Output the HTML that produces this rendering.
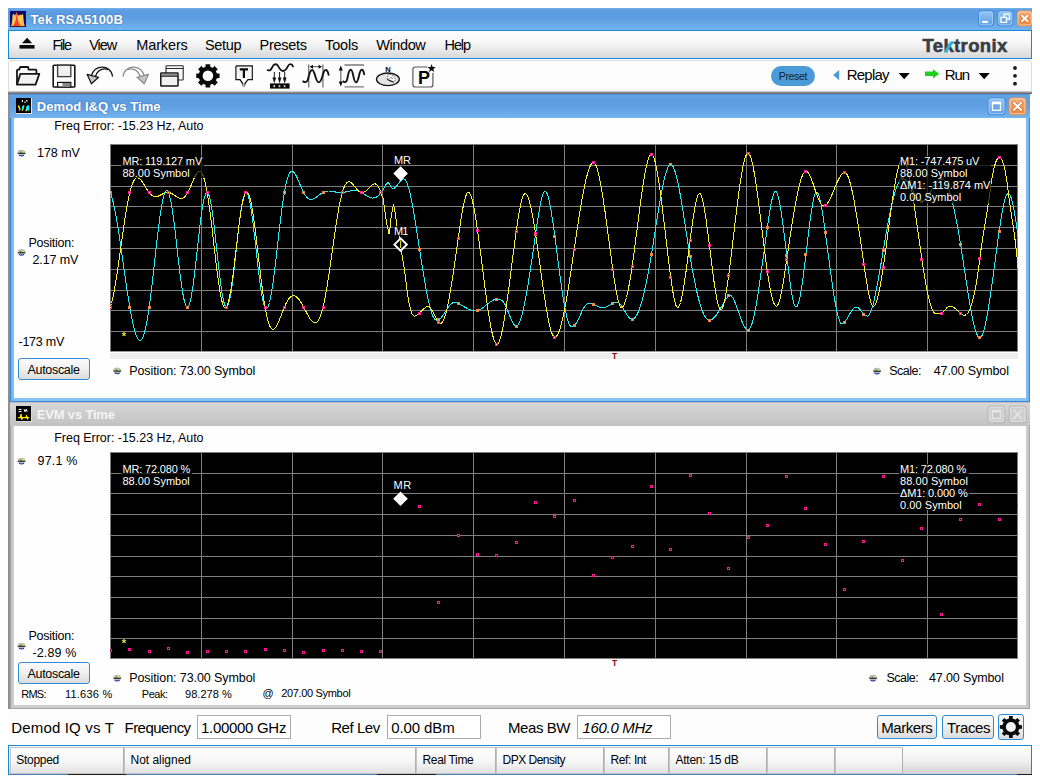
<!DOCTYPE html>
<html><head><meta charset="utf-8"><title>Tek RSA5100B</title>
<style>
html,body{margin:0;padding:0;background:#fff;}
body{width:1040px;height:784px;position:relative;overflow:hidden;font-family:'Liberation Sans', sans-serif;}
body>div,body>svg{position:absolute;box-sizing:border-box;}
div div{box-sizing:border-box;}
.t{z-index:3;position:absolute;white-space:pre;line-height:40px;font-family:'Liberation Sans', sans-serif;color:#000;}
</style></head><body>
<div style="left:8px;top:8px;width:1024px;height:22px;background:linear-gradient(to bottom,#74b3ee 0%,#5d9de1 9%,#5c9ce0 30%,#60a1e3 55%,#72b5ef 100%);"></div>
<div style="left:8px;top:30px;width:1024px;height:29px;border:1px solid #1c86d6;background:linear-gradient(to bottom,#fefefe 0%,#f6f6f6 45%,#d8d8d8 100%);"></div>
<div style="left:8px;top:60px;width:1024px;height:32px;border:1px solid #dcdcdc;border-radius:3px;background:#fdfdfd;"></div>
<div style="left:8px;top:91px;width:1024px;height:3px;background:linear-gradient(to bottom,#e0e0e0 0%,#8a8a8a 55%,#5a5a5a 100%);"></div>
<div style="left:771px;top:66px;width:44px;height:20px;background:#4b9bd9;border-radius:10px;"></div>
<div style="left:8px;top:94px;width:1022px;height:308px;background:#3c84d6;"></div>
<div style="left:8px;top:94px;width:1.5px;height:308px;background:#8f8f8f;"></div>
<div style="left:11px;top:94px;width:1018px;height:306.8px;background:linear-gradient(to right,#6eb1ee 0,#86c1f4 3px,#86c1f4 1015px,#6eb1ee 1018px);"></div>
<div style="left:9.5px;top:94px;width:1020.5px;height:24px;background:linear-gradient(to bottom,#4c8fdc 0%,#62a3e6 6%,#5d9ee1 30%,#609fe2 55%,#74b6f0 100%);"></div>
<div style="left:14px;top:118px;width:1012px;height:280px;background:#fefefe;"></div>
<div style="left:18px;top:358px;width:72px;height:22px;border:1px solid #2c8bd6;border-radius:3px;background:linear-gradient(to bottom,#fafafa 0%,#f0f0f0 50%,#dcdcdc 100%);"></div>
<div style="left:8px;top:402px;width:1022px;height:307px;background:#a6a6a6;"></div>
<div style="left:8px;top:402px;width:1.5px;height:307px;background:#8f8f8f;"></div>
<div style="left:11px;top:402px;width:1018px;height:305.8px;background:linear-gradient(to right,#c4c4c4 0,#cfcfcf 3px,#cfcfcf 1015px,#c4c4c4 1018px);"></div>
<div style="left:9.5px;top:402px;width:1020.5px;height:24px;background:linear-gradient(to bottom,#b4b4b4 0%,#d6d6d6 6%,#cfcfcf 40%,#c2c2c2 100%);"></div>
<div style="left:14px;top:426px;width:1012px;height:279px;background:#fefefe;"></div>
<div style="left:18px;top:662px;width:72px;height:22px;border:1px solid #2c8bd6;border-radius:3px;background:linear-gradient(to bottom,#fafafa 0%,#f0f0f0 50%,#dcdcdc 100%);"></div>
<div style="left:8px;top:709px;width:1024px;height:36px;background:#fdfdfd;"></div>
<div style="left:197px;top:715px;width:94px;height:24px;border:1px solid #ababab;background:#fff;"></div>
<div style="left:387px;top:715px;width:94px;height:24px;border:1px solid #ababab;background:#fff;"></div>
<div style="left:577px;top:715px;width:94px;height:24px;border:1px solid #ababab;background:#fff;"></div>
<div style="left:877px;top:715px;width:60px;height:24px;border:1px solid #2c8bd6;border-radius:3px;background:linear-gradient(to bottom,#fafafa 0%,#f0f0f0 50%,#dcdcdc 100%);"></div>
<div style="left:942px;top:715px;width:52px;height:24px;border:1px solid #2c8bd6;border-radius:3px;background:linear-gradient(to bottom,#fafafa 0%,#f0f0f0 50%,#dcdcdc 100%);"></div>
<div style="left:998px;top:714px;width:26px;height:26px;border:1px solid #2c8bd6;border-radius:3px;background:linear-gradient(to bottom,#fafafa 0%,#f0f0f0 50%,#dcdcdc 100%);"></div>
<div style="left:8px;top:745px;width:1024px;height:30px;border:1px solid #1c86d6;border-bottom-color:#4f7fb4;background:linear-gradient(to bottom,#fefefe 0%,#f2f2f2 50%,#d2d2d2 100%);"></div>
<div style="left:10px;top:747px;width:114px;height:27px;border:1px solid #c4c4c4;border-right-color:#b0b0b0;background:linear-gradient(to bottom,#fefefe 0%,#f6f6f6 55%,#e2e2e2 100%);"></div>
<div style="left:124px;top:747px;width:292px;height:27px;border:1px solid #c4c4c4;border-right-color:#b0b0b0;background:linear-gradient(to bottom,#fefefe 0%,#f6f6f6 55%,#e2e2e2 100%);"></div>
<div style="left:416px;top:747px;width:80px;height:27px;border:1px solid #c4c4c4;border-right-color:#b0b0b0;background:linear-gradient(to bottom,#fefefe 0%,#f6f6f6 55%,#e2e2e2 100%);"></div>
<div style="left:496px;top:747px;width:108px;height:27px;border:1px solid #c4c4c4;border-right-color:#b0b0b0;background:linear-gradient(to bottom,#fefefe 0%,#f6f6f6 55%,#e2e2e2 100%);"></div>
<div style="left:604px;top:747px;width:65px;height:27px;border:1px solid #c4c4c4;border-right-color:#b0b0b0;background:linear-gradient(to bottom,#fefefe 0%,#f6f6f6 55%,#e2e2e2 100%);"></div>
<div style="left:669px;top:747px;width:98px;height:27px;border:1px solid #c4c4c4;border-right-color:#b0b0b0;background:linear-gradient(to bottom,#fefefe 0%,#f6f6f6 55%,#e2e2e2 100%);"></div>
<div style="left:767px;top:747px;width:68px;height:27px;border:1px solid #c4c4c4;border-right-color:#b0b0b0;background:linear-gradient(to bottom,#fefefe 0%,#f6f6f6 55%,#e2e2e2 100%);"></div>
<div style="left:835px;top:747px;width:67.5px;height:27px;border:1px solid #c4c4c4;border-right-color:#b0b0b0;background:linear-gradient(to bottom,#fefefe 0%,#f6f6f6 55%,#e2e2e2 100%);"></div>
<div style="left:67.5px;top:774.3px;width:58.5px;height:1.2px;background:#1a1a1a;"></div>
<div style="left:377px;top:774.3px;width:59px;height:1.2px;background:#1a1a1a;"></div>
<div style="left:1017px;top:774.3px;width:15px;height:1.2px;background:#1a1a1a;"></div>
<svg style="left:0;top:0;pointer-events:none" width="1040" height="784" viewBox="0 0 1040 784"><rect x="110" y="144" width="908" height="207.39999999999998" fill="#000"/><path d="M110 144.5H1018M110 165.5H1018M110 186.5H1018M110 206.5H1018M110 227.5H1018M110 248.5H1018M110 269.5H1018M110 290.5H1018M110 310.5H1018M110 331.5H1018M110.5 144V351.4M201.5 144V351.4M292.5 144V351.4M382.5 144V351.4M473.5 144V351.4M564.5 144V351.4M655.5 144V351.4M746.5 144V351.4M836.5 144V351.4M927.5 144V351.4M1017.5 144V351.4" stroke="#7d7d7d" stroke-width="1" fill="none" shape-rendering="crispEdges"/><rect x="110" y="452" width="908" height="206.5" fill="#000"/><path d="M110 452.5H1018M110 473.5H1018M110 493.5H1018M110 514.5H1018M110 535.5H1018M110 556.5H1018M110 576.5H1018M110 597.5H1018M110 618.5H1018M110 638.5H1018M110.5 452V658.5M201.5 452V658.5M292.5 452V658.5M382.5 452V658.5M473.5 452V658.5M564.5 452V658.5M655.5 452V658.5M746.5 452V658.5M836.5 452V658.5M927.5 452V658.5M1017.5 452V658.5" stroke="#7d7d7d" stroke-width="1" fill="none" shape-rendering="crispEdges"/><rect x="110" y="353" width="908" height="6" fill="#efefef"/><clipPath id="c1"><rect x="110" y="144" width="908" height="207.5"/></clipPath><g clip-path="url(#c1)"><path d="M110.5 192.5 L111.5 195.7 L112.5 199.4 L113.5 203.6 L114.5 208.3 L115.5 213.4 L116.5 219.0 L117.5 224.9 L118.5 231.1 L119.5 237.6 L120.5 244.4 L121.5 251.3 L122.5 258.3 L123.5 265.3 L124.5 272.3 L125.5 279.3 L126.5 286.1 L127.5 292.8 L128.5 299.2 L129.5 305.3 L130.5 311.1 L131.5 316.5 L132.5 321.5 L133.5 326.0 L134.5 330.0 L135.5 333.4 L136.5 336.2 L137.5 338.3 L138.5 339.8 L139.5 340.5 L140.5 340.5 L141.5 339.7 L142.5 338.0 L143.5 335.6 L144.5 332.4 L145.5 328.3 L146.5 323.5 L147.5 317.9 L148.5 311.6 L149.5 304.6 L150.5 297.0 L151.5 289.0 L152.5 280.5 L153.5 271.7 L154.5 262.8 L155.5 253.8 L156.5 244.8 L157.5 236.1 L158.5 227.8 L159.5 220.0 L160.5 212.9 L161.5 206.5 L162.5 201.1 L163.5 196.7 L164.5 193.4 L165.5 191.3 L166.5 190.5 L167.5 190.9 L168.5 192.6 L169.5 195.5 L170.5 199.7 L171.5 204.9 L172.5 211.1 L173.5 218.2 L174.5 226.0 L175.5 234.4 L176.5 243.1 L177.5 252.0 L178.5 260.8 L179.5 269.4 L180.5 277.5 L181.5 285.0 L182.5 291.6 L183.5 297.3 L184.5 301.7 L185.5 305.0 L186.5 306.8 L187.5 307.3 L188.5 306.4 L189.5 304.0 L190.5 300.3 L191.5 295.4 L192.5 289.3 L193.5 282.2 L194.5 274.3 L195.5 265.7 L196.5 256.7 L197.5 247.6 L198.5 238.5 L199.5 229.7 L200.5 221.4 L201.5 213.8 L202.5 207.1 L203.5 201.6 L204.5 197.2 L205.5 194.3 L206.5 192.7 L207.5 192.7 L208.5 194.1 L209.5 196.9 L210.5 201.2 L211.5 206.7 L212.5 213.3 L213.5 220.9 L214.5 229.2 L215.5 238.1 L216.5 247.3 L217.5 256.6 L218.5 265.6 L219.5 274.3 L220.5 282.3 L221.5 289.5 L222.5 295.7 L223.5 300.6 L224.5 304.3 L225.5 306.5 L226.5 307.2 L227.5 306.5 L228.5 304.2 L229.5 300.6 L230.5 295.7 L231.5 289.5 L232.5 282.4 L233.5 274.4 L234.5 265.8 L235.5 256.8 L236.5 247.6 L237.5 238.5 L238.5 229.6 L239.5 221.3 L240.5 213.8 L241.5 207.1 L242.5 201.6 L243.5 197.3 L244.5 194.3 L245.5 192.7 L246.5 192.5 L247.5 193.8 L248.5 196.5 L249.5 200.5 L250.5 205.7 L251.5 212.0 L252.5 219.2 L253.5 227.2 L254.5 235.7 L255.5 244.5 L256.5 253.5 L257.5 262.4 L258.5 270.9 L259.5 279.0 L260.5 286.4 L261.5 292.9 L262.5 298.4 L263.5 302.8 L264.5 306.0 L265.5 307.9 L266.5 308.5 L267.5 307.8 L268.5 305.8 L269.5 302.5 L270.5 298.1 L271.5 292.7 L272.5 286.3 L273.5 279.1 L274.5 271.3 L275.5 263.0 L276.5 254.4 L277.5 245.6 L278.5 236.9 L279.5 228.2 L280.5 219.9 L281.5 212.0 L282.5 204.6 L283.5 197.8 L284.5 191.8 L285.5 186.5 L286.5 182.0 L287.5 178.3 L288.5 175.4 L289.5 173.3 L290.5 172.0 L291.5 171.4 L292.5 171.4 L293.5 172.0 L294.5 173.1 L295.5 174.7 L296.5 176.5 L297.5 178.6 L298.5 180.9 L299.5 183.3 L300.5 185.6 L301.5 187.9 L302.5 190.1 L303.5 192.1 L304.5 193.9 L305.5 195.5 L306.5 196.8 L307.5 197.9 L308.5 198.7 L309.5 199.2 L310.5 199.4 L311.5 199.5 L312.5 199.3 L313.5 198.9 L314.5 198.4 L315.5 197.8 L316.5 197.1 L317.5 196.4 L318.5 195.6 L319.5 194.8 L320.5 194.1 L321.5 193.4 L322.5 192.8 L323.5 192.3 L324.5 191.8 L325.5 191.5 L326.5 191.2 L327.5 191.1 L328.5 191.0 L329.5 191.0 L330.5 191.1 L331.5 191.2 L332.5 191.4 L333.5 191.6 L334.5 191.8 L335.5 192.0 L336.5 192.2 L337.5 192.3 L338.5 192.5 L339.5 192.5 L340.5 192.6 L341.5 192.6 L342.5 192.5 L343.5 192.4 L344.5 192.2 L345.5 192.0 L346.5 191.8 L347.5 191.6 L348.5 191.3 L349.5 191.1 L350.5 190.8 L351.5 190.7 L352.5 190.5 L353.5 190.4 L354.5 190.4 L355.5 190.4 L356.5 190.6 L357.5 190.8 L358.5 191.1 L359.5 191.4 L360.5 191.9 L361.5 192.4 L362.5 193.0 L363.5 193.6 L364.5 194.3 L365.5 194.9 L366.5 195.6 L367.5 196.2 L368.5 196.8 L369.5 197.2 L370.5 197.6 L371.5 197.9 L372.5 198.1 L373.5 198.0 L374.5 197.9 L375.5 197.5 L376.5 197.0 L377.5 196.3 L378.5 195.4 L379.5 194.3 L380.5 193.1 L381.5 191.8 L382.5 190.3 L383.0 190.0 L384.0 188.3 L385.0 186.4 L386.0 184.6 L387.0 183.2 L388.0 182.7 L389.0 183.4 L390.0 185.0 L391.0 186.8 L392.0 188.3 L393.0 188.7 L394.0 188.4 L395.0 187.7 L396.0 186.7 L397.0 185.5 L398.0 184.2 L399.0 182.8 L400.0 181.5 L401.0 180.4 L402.0 179.5 L403.0 178.9 L404.0 178.8 L405.0 179.4 L406.0 180.8 L407.0 183.0 L408.0 185.8 L409.0 189.2 L410.0 193.3 L411.0 197.8 L412.0 202.8 L413.0 208.2 L414.0 213.9 L415.0 219.9 L416.0 226.2 L417.0 232.6 L418.0 239.1 L419.0 245.6 L420.0 252.2 L421.0 258.6 L422.0 265.0 L423.0 271.2 L424.0 277.3 L425.0 283.1 L426.0 288.7 L427.0 293.9 L428.0 298.8 L429.0 303.2 L430.0 307.3 L431.0 310.8 L432.0 313.9 L433.0 316.4 L434.0 318.2 L435.0 319.4 L436.0 320.0 L437.0 320.0 L438.0 319.8 L439.0 319.4 L440.0 318.7 L441.0 317.8 L442.0 316.6 L443.0 315.3 L444.0 313.8 L445.0 312.3 L446.0 310.7 L447.0 309.2 L448.0 307.7 L449.0 306.3 L450.0 305.1 L451.0 304.0 L452.0 303.2 L453.0 302.7 L454.0 302.5 L455.0 302.5 L456.0 302.7 L457.0 303.1 L458.0 303.5 L459.0 303.9 L460.0 304.4 L461.0 304.9 L462.0 305.5 L463.0 306.1 L464.0 306.7 L465.0 307.2 L466.0 307.8 L467.0 308.3 L468.0 308.9 L469.0 309.3 L470.0 309.7 L471.0 310.1 L472.0 310.4 L473.0 310.6 L474.0 310.7 L475.0 310.7 L476.0 310.6 L477.0 310.5 L478.0 310.3 L479.0 309.9 L480.0 309.5 L481.0 308.9 L482.0 308.3 L483.0 307.6 L484.0 306.8 L485.0 306.0 L486.0 305.2 L487.0 304.4 L488.0 303.6 L489.0 302.8 L490.0 302.1 L491.0 301.4 L492.0 300.8 L493.0 300.2 L494.0 299.8 L495.0 299.4 L496.0 299.2 L497.0 299.2 L498.0 299.2 L499.0 299.3 L500.0 299.5 L501.0 299.9 L502.0 300.5 L503.0 301.4 L504.0 302.7 L505.0 304.4 L506.0 306.5 L507.0 308.9 L508.0 311.4 L509.0 313.9 L510.0 316.5 L511.0 318.9 L512.0 321.1 L513.0 323.0 L514.0 324.5 L515.0 325.6 L516.0 326.0 L517.0 325.8 L518.0 324.8 L519.0 323.2 L520.0 320.9 L521.0 318.1 L522.0 314.6 L523.0 310.7 L524.0 306.2 L525.0 301.4 L526.0 296.1 L527.0 290.5 L528.0 284.6 L529.0 278.4 L530.0 272.0 L531.0 265.4 L532.0 258.7 L533.0 251.9 L534.0 245.0 L535.0 238.1 L536.0 231.2 L537.0 224.5 L538.0 218.0 L539.0 211.9 L540.0 206.3 L541.0 201.4 L542.0 197.3 L543.0 194.2 L544.0 192.1 L545.0 191.2 L546.0 191.7 L547.0 193.4 L548.0 196.3 L549.0 200.1 L550.0 204.8 L551.0 210.3 L552.0 216.5 L553.0 223.2 L554.0 230.2 L555.0 237.6 L556.0 245.2 L557.0 252.9 L558.0 260.6 L559.0 268.2 L560.0 275.7 L561.0 283.0 L562.0 290.0 L563.0 296.6 L564.0 302.7 L565.0 308.3 L566.0 313.3 L567.0 317.6 L568.0 321.2 L569.0 323.8 L570.0 325.6 L571.0 326.3 L572.0 326.3 L573.0 326.1 L574.0 325.6 L575.0 324.7 L576.0 323.4 L577.0 321.8 L578.0 319.9 L579.0 317.9 L580.0 315.7 L581.0 313.5 L582.0 311.4 L583.0 309.4 L584.0 307.6 L585.0 306.0 L586.0 304.7 L587.0 303.9 L588.0 303.6 L589.0 303.6 L590.0 303.6 L591.0 303.8 L592.0 303.9 L593.0 304.2 L594.0 304.6 L595.0 305.0 L596.0 305.6 L597.0 306.1 L598.0 306.6 L599.0 307.0 L600.0 307.4 L601.0 307.6 L602.0 307.7 L603.0 307.6 L604.0 307.4 L605.0 307.2 L606.0 306.9 L607.0 306.5 L608.0 306.0 L609.0 305.5 L610.0 305.0 L611.0 304.5 L612.0 304.0 L613.0 303.5 L614.0 303.0 L615.0 302.6 L616.0 302.3 L617.0 302.2 L618.0 302.4 L619.0 303.1 L620.0 304.0 L621.0 305.3 L622.0 306.7 L623.0 308.3 L624.0 309.9 L625.0 311.6 L626.0 313.3 L627.0 314.9 L628.0 316.3 L629.0 317.6 L630.0 318.5 L631.0 319.2 L632.0 319.4 L633.0 319.3 L634.0 318.7 L635.0 317.7 L636.0 316.4 L637.0 314.6 L638.0 312.5 L639.0 310.0 L640.0 307.2 L641.0 304.1 L642.0 300.6 L643.0 296.8 L644.0 292.7 L645.0 288.4 L646.0 283.7 L647.0 278.8 L648.0 273.7 L649.0 268.3 L650.0 262.7 L651.0 256.9 L652.0 250.8 L653.0 244.6 L654.0 238.3 L655.0 231.9 L656.0 225.5 L657.0 219.2 L658.0 213.0 L659.0 206.8 L660.0 200.9 L661.0 195.3 L662.0 190.0 L663.0 185.0 L664.0 180.4 L665.0 176.3 L666.0 172.7 L667.0 169.7 L668.0 167.3 L669.0 165.6 L670.0 164.6 L671.0 164.4 L672.0 165.0 L673.0 166.4 L674.0 168.6 L675.0 171.4 L676.0 174.8 L677.0 178.8 L678.0 183.2 L679.0 188.2 L680.0 193.5 L681.0 199.1 L682.0 205.1 L683.0 211.2 L684.0 217.6 L685.0 224.0 L686.0 230.5 L687.0 237.0 L688.0 243.5 L689.0 249.8 L690.0 256.0 L691.0 261.9 L692.0 267.7 L693.0 273.1 L694.0 278.4 L695.0 283.3 L696.0 288.0 L697.0 292.4 L698.0 296.5 L699.0 300.4 L700.0 303.9 L701.0 307.1 L702.0 310.0 L703.0 312.5 L704.0 314.7 L705.0 316.5 L706.0 318.0 L707.0 319.1 L708.0 319.9 L709.0 320.2 L710.0 320.2 L711.0 319.9 L712.0 319.4 L713.0 318.7 L714.0 317.7 L715.0 316.6 L716.0 315.4 L717.0 314.0 L718.0 312.5 L719.0 310.9 L720.0 309.3 L721.0 307.6 L722.0 305.9 L723.0 304.1 L724.0 302.4 L725.0 300.8 L726.0 299.2 L727.0 297.7 L728.0 296.3 L729.0 295.0 L730.0 294.9 L731.0 295.5 L732.0 296.7 L733.0 298.3 L734.0 300.2 L735.0 302.5 L736.0 305.0 L737.0 307.7 L738.0 310.5 L739.0 313.3 L740.0 316.1 L741.0 318.9 L742.0 321.4 L743.0 323.8 L744.0 325.9 L745.0 327.6 L746.0 329.0 L747.0 329.8 L748.0 330.1 L749.0 329.7 L750.0 328.4 L751.0 326.3 L752.0 323.5 L753.0 319.9 L754.0 315.7 L755.0 311.0 L756.0 305.7 L757.0 299.9 L758.0 293.8 L759.0 287.3 L760.0 280.5 L761.0 273.5 L762.0 266.3 L763.0 259.0 L764.0 251.7 L765.0 244.3 L766.0 237.0 L767.0 229.9 L768.0 222.9 L769.0 216.2 L770.0 210.0 L771.0 204.4 L772.0 199.6 L773.0 195.7 L774.0 192.9 L775.0 191.5 L776.0 191.4 L777.0 192.8 L778.0 195.6 L779.0 199.6 L780.0 204.7 L781.0 210.7 L782.0 217.5 L783.0 224.9 L784.0 232.8 L785.0 241.0 L786.0 249.4 L787.0 257.8 L788.0 266.2 L789.0 274.2 L790.0 281.7 L791.0 288.6 L792.0 294.7 L793.0 299.7 L794.0 303.6 L795.0 306.1 L796.0 307.1 L797.0 306.5 L798.0 304.5 L799.0 301.2 L800.0 296.7 L801.0 291.3 L802.0 285.0 L803.0 278.0 L804.0 270.4 L805.0 262.4 L806.0 254.2 L807.0 245.7 L808.0 237.4 L809.0 229.2 L810.0 221.4 L811.0 214.1 L812.0 207.6 L813.0 202.0 L814.0 197.5 L815.0 194.2 L816.0 192.4 L817.0 192.1 L818.0 193.4 L819.0 195.9 L820.0 199.6 L821.0 204.3 L822.0 209.9 L823.0 216.1 L824.0 222.9 L825.0 230.1 L826.0 237.5 L827.0 245.0 L828.0 252.7 L829.0 260.3 L830.0 267.8 L831.0 275.2 L832.0 282.3 L833.0 289.1 L834.0 295.5 L835.0 301.5 L836.0 306.9 L837.0 311.8 L838.0 315.9 L839.0 319.3 L840.0 321.8 L841.0 323.5 L842.0 324.1 L843.0 323.8 L844.0 322.9 L845.0 321.7 L846.0 320.2 L847.0 318.7 L848.0 317.0 L849.0 315.3 L850.0 313.6 L851.0 312.0 L852.0 310.5 L853.0 309.2 L854.0 308.2 L855.0 307.5 L856.0 307.2 L857.0 307.2 L858.0 307.7 L859.0 308.5 L860.0 309.5 L861.0 310.7 L862.0 312.0 L863.0 313.2 L864.0 314.3 L865.0 315.2 L866.0 315.8 L867.0 316.1 L868.0 316.0 L869.0 315.1 L870.0 313.4 L871.0 311.1 L872.0 308.2 L873.0 304.7 L874.0 300.8 L875.0 296.3 L876.0 291.5 L877.0 286.4 L878.0 281.0 L879.0 275.3 L880.0 269.5 L881.0 263.6 L882.0 257.7 L883.0 251.7 L884.0 245.8 L885.0 240.0 L886.0 234.3 L887.0 228.7 L888.0 223.3 L889.0 218.1 L890.0 213.1 L891.0 208.4 L892.0 203.9 L893.0 199.7 L894.0 195.8 L895.0 192.2 L896.0 189.0 L897.0 186.1 L898.0 183.7 L899.0 181.7 L900.0 180.1 L901.0 179.1 L902.0 178.5 L903.0 178.4 L904.0 178.8 L905.0 179.4 L906.0 180.3 L907.0 181.4 L908.0 182.8 L909.0 184.3 L910.0 185.9 L911.0 187.6 L912.0 189.4 L913.0 191.2 L914.0 192.9 L915.0 194.6 L916.0 196.2 L917.0 197.6 L918.0 198.9 L919.0 199.9 L920.0 200.7 L921.0 201.2 L922.0 201.3 L923.0 201.1 L924.0 200.5 L925.0 199.7 L926.0 198.6 L927.0 197.3 L928.0 195.9 L929.0 194.3 L930.0 192.6 L931.0 190.8 L932.0 189.0 L933.0 187.3 L934.0 185.5 L935.0 183.9 L936.0 182.4 L937.0 181.1 L938.0 180.0 L939.0 179.1 L940.0 178.6 L941.0 178.3 L942.0 178.4 L943.0 179.0 L944.0 179.9 L945.0 181.2 L946.0 182.9 L947.0 185.0 L948.0 187.4 L949.0 190.2 L950.0 193.4 L951.0 196.8 L952.0 200.6 L953.0 204.7 L954.0 209.1 L955.0 213.7 L956.0 218.7 L957.0 223.9 L958.0 229.4 L959.0 235.1 L960.0 241.1 L961.0 247.2 L962.0 253.6 L963.0 260.1 L964.0 266.7 L965.0 273.3 L966.0 279.9 L967.0 286.4 L968.0 292.8 L969.0 299.0 L970.0 304.9 L971.0 310.5 L972.0 315.7 L973.0 320.6 L974.0 324.9 L975.0 328.7 L976.0 331.9 L977.0 334.5 L978.0 336.4 L979.0 337.5 L980.0 337.8 L981.0 337.2 L982.0 335.6 L983.0 333.2 L984.0 330.0 L985.0 326.1 L986.0 321.5 L987.0 316.4 L988.0 310.7 L989.0 304.5 L990.0 298.0 L991.0 291.1 L992.0 284.0 L993.0 276.7 L994.0 269.2 L995.0 261.7 L996.0 254.2 L997.0 246.8 L998.0 239.5 L999.0 232.5 L1000.0 225.7 L1001.0 219.3 L1002.0 213.4 L1003.0 208.0 L1004.0 203.3 L1005.0 199.4 L1006.0 196.4 L1007.0 194.4 L1008.0 193.5 L1009.0 193.7 L1010.0 195.0 L1011.0 197.4 L1012.0 200.7 L1013.0 204.9 L1014.0 209.9 L1015.0 215.7 L1016.0 222.1 L1017.0 229.1 L1018.0 236.6" stroke="#22eef6" stroke-width="1" fill="none" shape-rendering="crispEdges"/><path d="M110.5 307.2 L111.5 303.5 L112.5 299.3 L113.5 294.4 L114.5 289.1 L115.5 283.3 L116.5 277.0 L117.5 270.5 L118.5 263.6 L119.5 256.6 L120.5 249.4 L121.5 242.3 L122.5 235.2 L123.5 228.2 L124.5 221.5 L125.5 215.1 L126.5 209.1 L127.5 203.5 L128.5 198.4 L129.5 193.8 L130.5 189.8 L131.5 186.4 L132.5 183.6 L133.5 181.3 L134.5 179.6 L135.5 178.5 L136.5 177.8 L137.5 177.7 L138.5 178.0 L139.5 178.6 L140.5 179.6 L141.5 180.8 L142.5 182.2 L143.5 183.8 L144.5 185.4 L145.5 187.0 L146.5 188.7 L147.5 190.2 L148.5 191.7 L149.5 192.9 L150.5 194.1 L151.5 195.0 L152.5 195.7 L153.5 196.2 L154.5 196.5 L155.5 196.6 L156.5 196.5 L157.5 196.3 L158.5 196.0 L159.5 195.5 L160.5 195.0 L161.5 194.5 L162.5 194.0 L163.5 193.5 L164.5 193.1 L165.5 192.8 L166.5 192.5 L167.5 192.5 L168.5 192.5 L169.5 192.7 L170.5 193.0 L171.5 193.5 L172.5 194.0 L173.5 194.7 L174.5 195.4 L175.5 196.1 L176.5 196.8 L177.5 197.4 L178.5 197.9 L179.5 198.3 L180.5 198.6 L181.5 198.6 L182.5 198.3 L183.5 197.8 L184.5 197.1 L185.5 196.0 L186.5 194.6 L187.5 193.0 L188.5 191.1 L189.5 189.0 L190.5 186.8 L191.5 184.4 L192.5 182.1 L193.5 179.7 L194.5 177.5 L195.5 175.5 L196.5 173.7 L197.5 172.4 L198.5 171.5 L199.5 171.2 L200.5 171.5 L201.5 172.5 L202.5 174.2 L203.5 176.8 L204.5 180.1 L205.5 184.2 L206.5 189.2 L207.5 194.9 L208.5 201.3 L209.5 208.4 L210.5 216.0 L211.5 224.1 L212.5 232.5 L213.5 241.1 L214.5 249.8 L215.5 258.4 L216.5 266.7 L217.5 274.6 L218.5 282.0 L219.5 288.7 L220.5 294.5 L221.5 299.5 L222.5 303.3 L223.5 306.1 L224.5 307.6 L225.5 308.0 L226.5 307.1 L227.5 305.0 L228.5 301.7 L229.5 297.3 L230.5 291.9 L231.5 285.6 L232.5 278.6 L233.5 270.9 L234.5 262.8 L235.5 254.4 L236.5 245.9 L237.5 237.5 L238.5 229.4 L239.5 221.7 L240.5 214.6 L241.5 208.3 L242.5 202.8 L243.5 198.4 L244.5 195.0 L245.5 192.8 L246.5 191.9 L247.5 192.1 L248.5 193.5 L249.5 196.2 L250.5 199.9 L251.5 204.7 L252.5 210.4 L253.5 217.0 L254.5 224.3 L255.5 232.1 L256.5 240.3 L257.5 248.8 L258.5 257.4 L259.5 266.0 L260.5 274.4 L261.5 282.5 L262.5 290.2 L263.5 297.3 L264.5 303.9 L265.5 309.7 L266.5 314.9 L267.5 319.2 L268.5 322.8 L269.5 325.6 L270.5 327.6 L271.5 328.9 L272.5 329.5 L273.5 329.4 L274.5 328.8 L275.5 327.7 L276.5 326.1 L277.5 324.2 L278.5 321.9 L279.5 319.5 L280.5 317.0 L281.5 314.4 L282.5 311.8 L283.5 309.3 L284.5 306.9 L285.5 304.7 L286.5 302.6 L287.5 300.8 L288.5 299.3 L289.5 298.0 L290.5 297.1 L291.5 296.3 L292.5 295.9 L293.5 295.8 L294.5 295.9 L295.5 296.3 L296.5 297.0 L297.5 297.9 L298.5 299.0 L299.5 300.2 L300.5 301.7 L301.5 303.3 L302.5 305.0 L303.5 306.8 L304.5 308.7 L305.5 310.6 L306.5 312.5 L307.5 314.4 L308.5 316.2 L309.5 317.9 L310.5 319.4 L311.5 320.7 L312.5 321.7 L313.5 322.5 L314.5 322.9 L315.5 322.9 L316.5 322.4 L317.5 321.5 L318.5 320.2 L319.5 318.2 L320.5 315.8 L321.5 312.8 L322.5 309.2 L323.5 305.1 L324.5 300.5 L325.5 295.3 L326.5 289.7 L327.5 283.7 L328.5 277.3 L329.5 270.7 L330.5 263.8 L331.5 256.7 L332.5 249.6 L333.5 242.5 L334.5 235.5 L335.5 228.7 L336.5 222.1 L337.5 215.9 L338.5 210.1 L339.5 204.7 L340.5 199.9 L341.5 195.6 L342.5 191.9 L343.5 188.8 L344.5 186.3 L345.5 184.4 L346.5 183.0 L347.5 182.2 L348.5 181.8 L349.5 181.9 L350.5 182.3 L351.5 183.1 L352.5 184.0 L353.5 185.2 L354.5 186.4 L355.5 187.6 L356.5 188.8 L357.5 189.9 L358.5 190.9 L359.5 191.6 L360.5 192.2 L361.5 192.5 L362.5 192.5 L363.5 192.3 L364.5 191.9 L365.5 191.2 L366.5 190.4 L367.5 189.5 L368.5 188.4 L369.5 187.4 L370.5 186.3 L371.5 185.4 L372.5 184.7 L373.5 184.1 L374.5 183.9 L375.5 184.0 L376.5 184.5 L377.5 185.4 L378.5 186.8 L379.5 188.7 L380.5 191.2 L381.5 194.1 L382.5 197.6 L383.0 197.6 L386.5 223.0 L389.0 233.5 L389.6 232.0 L391.5 214.0 L393.5 205.2 L393.5 205.2 L394.5 208.1 L395.5 215.1 L396.5 223.6 L397.5 229.9 L398.5 233.5 L399.5 237.1 L400.5 243.2 L401.5 251.2 L402.5 258.0 L403.5 264.2 L404.5 270.5 L405.5 277.6 L406.5 285.9 L407.5 293.5 L408.5 300.0 L409.5 305.2 L410.5 309.4 L411.5 312.6 L412.5 314.7 L413.5 315.9 L414.5 316.2 L415.5 316.0 L416.5 315.6 L417.5 314.9 L418.5 314.2 L419.5 313.3 L420.5 312.2 L421.5 311.2 L422.5 310.1 L423.5 309.1 L424.5 308.2 L425.5 307.5 L426.5 306.9 L427.5 306.6 L428.5 306.6 L429.5 307.2 L430.5 308.2 L431.5 309.6 L432.5 311.2 L433.5 313.0 L434.5 314.9 L435.5 316.9 L436.5 318.7 L437.5 320.3 L438.5 321.7 L439.5 322.7 L440.5 323.2 L441.5 323.1 L442.5 322.2 L443.5 320.4 L444.5 318.0 L445.5 314.8 L446.5 311.0 L447.5 306.6 L448.5 301.7 L449.5 296.4 L450.5 290.6 L451.5 284.5 L452.5 278.0 L453.5 271.4 L454.5 264.5 L455.5 257.5 L456.5 250.4 L457.5 243.4 L458.5 236.3 L459.5 229.3 L460.5 222.6 L461.5 216.2 L462.5 210.3 L463.5 205.0 L464.5 200.5 L465.5 196.8 L466.5 194.1 L467.5 192.5 L468.5 192.1 L469.5 192.9 L470.5 194.7 L471.5 197.5 L472.5 201.2 L473.5 205.7 L474.5 210.9 L475.5 216.8 L476.5 223.1 L477.5 230.0 L478.5 237.2 L479.5 244.7 L480.5 252.4 L481.5 260.3 L482.5 268.2 L483.5 276.1 L484.5 284.0 L485.5 291.6 L486.5 299.1 L487.5 306.2 L488.5 313.0 L489.5 319.3 L490.5 325.0 L491.5 330.2 L492.5 334.6 L493.5 338.3 L494.5 341.2 L495.5 343.1 L496.5 344.0 L497.5 343.9 L498.5 342.8 L499.5 340.6 L500.5 337.6 L501.5 333.8 L502.5 329.3 L503.5 324.1 L504.5 318.2 L505.5 311.9 L506.5 305.1 L507.5 298.0 L508.5 290.6 L509.5 282.9 L510.5 275.1 L511.5 267.2 L512.5 259.3 L513.5 251.5 L514.5 243.8 L515.5 236.3 L516.5 229.1 L517.5 222.3 L518.5 216.0 L519.5 210.2 L520.5 205.2 L521.5 200.9 L522.5 197.5 L523.5 195.0 L524.5 193.7 L525.5 193.5 L526.5 194.3 L527.5 196.0 L528.5 198.5 L529.5 201.8 L530.5 205.7 L531.5 210.3 L532.5 215.4 L533.5 221.1 L534.5 227.1 L535.5 233.6 L536.5 240.3 L537.5 247.2 L538.5 254.4 L539.5 261.6 L540.5 268.9 L541.5 276.1 L542.5 283.3 L543.5 290.2 L544.5 297.0 L545.5 303.4 L546.5 309.5 L547.5 315.2 L548.5 320.3 L549.5 324.9 L550.5 328.9 L551.5 332.2 L552.5 334.7 L553.5 336.4 L554.5 337.2 L555.5 337.1 L556.5 336.3 L557.5 334.9 L558.5 332.8 L559.5 330.2 L560.5 327.1 L561.5 323.4 L562.5 319.3 L563.5 314.7 L564.5 309.8 L565.5 304.5 L566.5 298.9 L567.5 293.1 L568.5 287.0 L569.5 280.6 L570.5 274.2 L571.5 267.5 L572.5 260.8 L573.5 254.1 L574.5 247.3 L575.5 240.5 L576.5 233.8 L577.5 227.2 L578.5 220.7 L579.5 214.3 L580.5 208.2 L581.5 202.3 L582.5 196.6 L583.5 191.3 L584.5 186.3 L585.5 181.6 L586.5 177.4 L587.5 173.7 L588.5 170.4 L589.5 167.6 L590.5 165.4 L591.5 163.8 L592.5 162.8 L593.5 162.5 L594.5 163.0 L595.5 164.4 L596.5 166.7 L597.5 169.7 L598.5 173.5 L599.5 178.0 L600.5 183.0 L601.5 188.6 L602.5 194.7 L603.5 201.1 L604.5 207.9 L605.5 215.0 L606.5 222.3 L607.5 229.8 L608.5 237.4 L609.5 244.9 L610.5 252.5 L611.5 259.9 L612.5 267.2 L613.5 274.2 L614.5 280.9 L615.5 287.2 L616.5 292.8 L617.5 297.7 L618.5 301.8 L619.5 304.9 L620.5 306.9 L621.5 307.7 L622.5 307.3 L623.5 306.0 L624.5 303.9 L625.5 301.0 L626.5 297.5 L627.5 293.2 L628.5 288.3 L629.5 282.9 L630.5 276.9 L631.5 270.5 L632.5 263.6 L633.5 256.5 L634.5 249.0 L635.5 241.4 L636.5 233.6 L637.5 225.8 L638.5 218.0 L639.5 210.3 L640.5 202.8 L641.5 195.6 L642.5 188.7 L643.5 182.2 L644.5 176.2 L645.5 170.8 L646.5 166.0 L647.5 161.9 L648.5 158.6 L649.5 156.2 L650.5 154.7 L651.5 154.2 L652.5 154.9 L653.5 156.7 L654.5 159.5 L655.5 163.3 L656.5 168.0 L657.5 173.4 L658.5 179.6 L659.5 186.3 L660.5 193.5 L661.5 201.2 L662.5 209.3 L663.5 217.6 L664.5 226.0 L665.5 234.6 L666.5 243.1 L667.5 251.6 L668.5 259.9 L669.5 267.9 L670.5 275.6 L671.5 282.9 L672.5 289.6 L673.5 295.4 L674.5 300.4 L675.5 304.2 L676.5 306.7 L677.5 307.7 L678.5 307.1 L679.5 305.4 L680.5 302.5 L681.5 298.6 L682.5 293.8 L683.5 288.2 L684.5 282.0 L685.5 275.2 L686.5 268.0 L687.5 260.5 L688.5 252.8 L689.5 245.0 L690.5 237.3 L691.5 229.7 L692.5 222.5 L693.5 215.7 L694.5 209.5 L695.5 204.2 L696.5 199.7 L697.5 196.3 L698.5 194.2 L699.5 193.4 L700.5 194.1 L701.5 196.3 L702.5 199.6 L703.5 204.1 L704.5 209.5 L705.5 215.8 L706.5 222.7 L707.5 230.2 L708.5 238.0 L709.5 246.1 L710.5 254.2 L711.5 262.3 L712.5 270.3 L713.5 277.9 L714.5 285.0 L715.5 291.5 L716.5 297.2 L717.5 302.0 L718.5 305.8 L719.5 308.5 L720.5 309.7 L721.5 309.6 L722.5 308.0 L723.5 305.2 L724.5 301.2 L725.5 296.2 L726.5 290.4 L727.5 283.8 L728.5 276.6 L729.5 269.1 L730.5 261.1 L731.5 252.9 L732.5 244.5 L733.5 236.1 L734.5 227.6 L735.5 219.1 L736.5 210.9 L737.5 202.8 L738.5 195.1 L739.5 187.8 L740.5 180.9 L741.5 174.6 L742.5 169.0 L743.5 164.0 L744.5 159.9 L745.5 156.7 L746.5 154.5 L747.5 153.3 L748.5 153.3 L749.5 154.4 L750.5 156.6 L751.5 159.7 L752.5 163.8 L753.5 168.6 L754.5 174.2 L755.5 180.4 L756.5 187.1 L757.5 194.3 L758.5 201.9 L759.5 209.7 L760.5 217.8 L761.5 226.0 L762.5 234.2 L763.5 242.3 L764.5 250.3 L765.5 258.1 L766.5 265.5 L767.5 272.5 L768.5 279.1 L769.5 285.1 L770.5 290.4 L771.5 295.1 L772.5 299.1 L773.5 302.3 L774.5 304.5 L775.5 305.9 L776.5 306.3 L777.5 305.5 L778.5 303.6 L779.5 300.6 L780.5 296.7 L781.5 292.0 L782.5 286.7 L783.5 280.8 L784.5 274.5 L785.5 267.9 L786.5 261.2 L787.5 254.4 L788.5 247.6 L789.5 240.8 L790.5 234.2 L791.5 227.7 L792.5 221.3 L793.5 215.2 L794.5 209.3 L795.5 203.6 L796.5 198.3 L797.5 193.4 L798.5 188.8 L799.5 184.7 L800.5 181.1 L801.5 177.9 L802.5 175.4 L803.5 173.4 L804.5 172.0 L805.5 171.3 L806.5 171.3 L807.5 172.0 L808.5 173.2 L809.5 174.9 L810.5 177.0 L811.5 179.4 L812.5 182.1 L813.5 185.0 L814.5 187.9 L815.5 190.9 L816.5 193.8 L817.5 196.6 L818.5 199.1 L819.5 201.4 L820.5 203.3 L821.5 204.8 L822.5 205.7 L823.5 206.0 L824.5 205.9 L825.5 205.4 L826.5 204.5 L827.5 203.2 L828.5 201.7 L829.5 199.8 L830.5 197.8 L831.5 195.6 L832.5 193.3 L833.5 190.9 L834.5 188.5 L835.5 186.1 L836.5 183.7 L837.5 181.5 L838.5 179.4 L839.5 177.5 L840.5 175.8 L841.5 174.4 L842.5 173.3 L843.5 172.6 L844.5 172.3 L845.5 172.6 L846.5 173.6 L847.5 175.3 L848.5 177.7 L849.5 180.7 L850.5 184.2 L851.5 188.2 L852.5 192.7 L853.5 197.7 L854.5 203.0 L855.5 208.7 L856.5 214.7 L857.5 220.9 L858.5 227.4 L859.5 234.0 L860.5 240.7 L861.5 247.6 L862.5 254.4 L863.5 261.3 L864.5 268.2 L865.5 274.8 L866.5 281.2 L867.5 287.2 L868.5 292.6 L869.5 297.3 L870.5 301.2 L871.5 304.1 L872.5 305.8 L873.5 306.3 L874.5 305.6 L875.5 304.1 L876.5 301.6 L877.5 298.3 L878.5 294.3 L879.5 289.6 L880.5 284.3 L881.5 278.5 L882.5 272.2 L883.5 265.5 L884.5 258.5 L885.5 251.3 L886.5 243.9 L887.5 236.4 L888.5 228.8 L889.5 221.3 L890.5 213.8 L891.5 206.6 L892.5 199.6 L893.5 192.9 L894.5 186.6 L895.5 180.8 L896.5 175.5 L897.5 170.9 L898.5 166.9 L899.5 163.6 L900.5 161.1 L901.5 159.6 L902.5 159.0 L903.5 159.4 L904.5 160.6 L905.5 162.7 L906.5 165.5 L907.5 169.0 L908.5 173.1 L909.5 177.8 L910.5 183.0 L911.5 188.6 L912.5 194.6 L913.5 201.0 L914.5 207.6 L915.5 214.5 L916.5 221.5 L917.5 228.6 L918.5 235.7 L919.5 242.8 L920.5 249.9 L921.5 256.7 L922.5 263.4 L923.5 269.8 L924.5 275.9 L925.5 281.8 L926.5 287.2 L927.5 292.2 L928.5 296.8 L929.5 301.0 L930.5 304.6 L931.5 307.7 L932.5 310.1 L933.5 312.0 L934.5 313.2 L935.5 313.7 L936.5 313.7 L937.5 313.7 L938.5 313.6 L939.5 313.5 L940.5 313.3 L941.5 313.1 L942.5 312.5 L943.5 311.6 L944.5 310.5 L945.5 309.4 L946.5 308.2 L947.5 307.2 L948.5 306.5 L949.5 306.1 L950.5 306.1 L951.5 306.3 L952.5 306.7 L953.5 307.2 L954.5 307.9 L955.5 308.6 L956.5 309.5 L957.5 310.4 L958.5 311.3 L959.5 312.2 L960.5 313.1 L961.5 314.0 L962.5 314.7 L963.5 315.2 L964.5 315.3 L965.5 315.1 L966.5 314.5 L967.5 313.5 L968.5 312.0 L969.5 310.1 L970.5 307.7 L971.5 304.8 L972.5 301.3 L973.5 297.4 L974.5 292.9 L975.5 287.8 L976.5 282.1 L977.5 275.8 L978.5 268.9 L979.5 261.3 L980.5 253.3 L981.5 246.0 L982.5 239.3 L983.5 232.9 L984.5 226.9 L985.5 221.0 L986.5 215.0 L987.5 208.8 L988.5 202.3 L989.5 195.3 L990.5 187.9 L991.5 181.1 L992.5 175.3 L993.5 170.3 L994.5 166.2 L995.5 162.8 L996.5 160.3 L997.5 158.6 L998.5 157.7 L999.5 157.6 L1000.5 158.1 L1001.5 159.3 L1002.5 161.3 L1003.5 164.1 L1004.5 167.9 L1005.5 172.7 L1006.5 178.5 L1007.5 185.6 L1008.5 193.9 L1009.5 201.8 L1010.5 208.9 L1011.5 215.5 L1012.5 221.9 L1013.5 228.5 L1014.5 235.5 L1015.5 243.2 L1016.5 252.1 L1017.5 262.3 L1018.5 274.2" stroke="#f8f22e" stroke-width="1" fill="none" shape-rendering="crispEdges"/><rect x="109" y="191" width="3" height="3" fill="#ee8440"/><rect x="110" y="192" width="1" height="1" fill="#8fe0d0"/><rect x="128" y="306" width="3" height="3" fill="#ee8440"/><rect x="129" y="307" width="1" height="1" fill="#8fe0d0"/><rect x="148" y="306" width="3" height="3" fill="#ee8440"/><rect x="149" y="307" width="1" height="1" fill="#8fe0d0"/><rect x="167" y="191" width="3" height="3" fill="#ee8440"/><rect x="168" y="192" width="1" height="1" fill="#8fe0d0"/><rect x="186" y="306" width="3" height="3" fill="#ee8440"/><rect x="187" y="307" width="1" height="1" fill="#8fe0d0"/><rect x="206" y="191" width="3" height="3" fill="#ee8440"/><rect x="207" y="192" width="1" height="1" fill="#8fe0d0"/><rect x="225" y="306" width="3" height="3" fill="#ee8440"/><rect x="226" y="307" width="1" height="1" fill="#8fe0d0"/><rect x="244" y="191" width="3" height="3" fill="#ee8440"/><rect x="245" y="192" width="1" height="1" fill="#8fe0d0"/><rect x="264" y="306" width="3" height="3" fill="#ee8440"/><rect x="265" y="307" width="1" height="1" fill="#8fe0d0"/><rect x="283" y="191" width="3" height="3" fill="#ee8440"/><rect x="284" y="192" width="1" height="1" fill="#8fe0d0"/><rect x="302" y="191" width="3" height="3" fill="#ee8440"/><rect x="303" y="192" width="1" height="1" fill="#8fe0d0"/><rect x="322" y="191" width="3" height="3" fill="#ee8440"/><rect x="323" y="192" width="1" height="1" fill="#8fe0d0"/><rect x="341" y="191" width="3" height="3" fill="#ee8440"/><rect x="342" y="192" width="1" height="1" fill="#8fe0d0"/><rect x="360" y="191" width="3" height="3" fill="#ee8440"/><rect x="361" y="192" width="1" height="1" fill="#8fe0d0"/><rect x="379" y="191" width="3" height="3" fill="#ee8440"/><rect x="380" y="192" width="1" height="1" fill="#8fe0d0"/><rect x="418" y="248" width="3" height="3" fill="#ee8440"/><rect x="419" y="249" width="1" height="1" fill="#8fe0d0"/><rect x="437" y="318" width="3" height="3" fill="#ee8440"/><rect x="438" y="319" width="1" height="1" fill="#8fe0d0"/><rect x="457" y="302" width="3" height="3" fill="#ee8440"/><rect x="458" y="303" width="1" height="1" fill="#8fe0d0"/><rect x="476" y="309" width="3" height="3" fill="#ee8440"/><rect x="477" y="310" width="1" height="1" fill="#8fe0d0"/><rect x="495" y="298" width="3" height="3" fill="#ee8440"/><rect x="496" y="299" width="1" height="1" fill="#8fe0d0"/><rect x="515" y="325" width="3" height="3" fill="#ee8440"/><rect x="516" y="326" width="1" height="1" fill="#8fe0d0"/><rect x="534" y="233" width="3" height="3" fill="#ee8440"/><rect x="535" y="234" width="1" height="1" fill="#8fe0d0"/><rect x="553" y="235" width="3" height="3" fill="#ee8440"/><rect x="554" y="236" width="1" height="1" fill="#8fe0d0"/><rect x="573" y="324" width="3" height="3" fill="#ee8440"/><rect x="574" y="325" width="1" height="1" fill="#8fe0d0"/><rect x="592" y="303" width="3" height="3" fill="#ee8440"/><rect x="593" y="304" width="1" height="1" fill="#8fe0d0"/><rect x="611" y="302" width="3" height="3" fill="#ee8440"/><rect x="612" y="303" width="1" height="1" fill="#8fe0d0"/><rect x="631" y="318" width="3" height="3" fill="#ee8440"/><rect x="632" y="319" width="1" height="1" fill="#8fe0d0"/><rect x="650" y="253" width="3" height="3" fill="#ee8440"/><rect x="651" y="254" width="1" height="1" fill="#8fe0d0"/><rect x="669" y="163" width="3" height="3" fill="#ee8440"/><rect x="670" y="164" width="1" height="1" fill="#8fe0d0"/><rect x="689" y="255" width="3" height="3" fill="#ee8440"/><rect x="690" y="256" width="1" height="1" fill="#8fe0d0"/><rect x="708" y="319" width="3" height="3" fill="#ee8440"/><rect x="709" y="320" width="1" height="1" fill="#8fe0d0"/><rect x="727" y="294" width="3" height="3" fill="#ee8440"/><rect x="728" y="295" width="1" height="1" fill="#8fe0d0"/><rect x="747" y="329" width="3" height="3" fill="#ee8440"/><rect x="748" y="330" width="1" height="1" fill="#8fe0d0"/><rect x="766" y="226" width="3" height="3" fill="#ee8440"/><rect x="767" y="227" width="1" height="1" fill="#8fe0d0"/><rect x="785" y="254" width="3" height="3" fill="#ee8440"/><rect x="786" y="255" width="1" height="1" fill="#8fe0d0"/><rect x="804" y="253" width="3" height="3" fill="#ee8440"/><rect x="805" y="254" width="1" height="1" fill="#8fe0d0"/><rect x="824" y="231" width="3" height="3" fill="#ee8440"/><rect x="825" y="232" width="1" height="1" fill="#8fe0d0"/><rect x="843" y="321" width="3" height="3" fill="#ee8440"/><rect x="844" y="322" width="1" height="1" fill="#8fe0d0"/><rect x="862" y="313" width="3" height="3" fill="#ee8440"/><rect x="863" y="314" width="1" height="1" fill="#8fe0d0"/><rect x="882" y="249" width="3" height="3" fill="#ee8440"/><rect x="883" y="250" width="1" height="1" fill="#8fe0d0"/><rect x="901" y="177" width="3" height="3" fill="#ee8440"/><rect x="902" y="178" width="1" height="1" fill="#8fe0d0"/><rect x="920" y="200" width="3" height="3" fill="#ee8440"/><rect x="921" y="201" width="1" height="1" fill="#8fe0d0"/><rect x="940" y="177" width="3" height="3" fill="#ee8440"/><rect x="941" y="178" width="1" height="1" fill="#8fe0d0"/><rect x="959" y="243" width="3" height="3" fill="#ee8440"/><rect x="960" y="244" width="1" height="1" fill="#8fe0d0"/><rect x="978" y="336" width="3" height="3" fill="#ee8440"/><rect x="979" y="337" width="1" height="1" fill="#8fe0d0"/><rect x="998" y="230" width="3" height="3" fill="#ee8440"/><rect x="999" y="231" width="1" height="1" fill="#8fe0d0"/><rect x="1017" y="239" width="3" height="3" fill="#ee8440"/><rect x="1018" y="240" width="1" height="1" fill="#8fe0d0"/><rect x="109" y="306" width="3" height="3" fill="#ff1f8e"/><rect x="110" y="307" width="1" height="1" fill="#ffe060"/><rect x="128" y="191" width="3" height="3" fill="#ff1f8e"/><rect x="129" y="192" width="1" height="1" fill="#ffe060"/><rect x="148" y="191" width="3" height="3" fill="#ff1f8e"/><rect x="149" y="192" width="1" height="1" fill="#ffe060"/><rect x="167" y="191" width="3" height="3" fill="#ff1f8e"/><rect x="168" y="192" width="1" height="1" fill="#ffe060"/><rect x="186" y="191" width="3" height="3" fill="#ff1f8e"/><rect x="187" y="192" width="1" height="1" fill="#ffe060"/><rect x="206" y="191" width="3" height="3" fill="#ff1f8e"/><rect x="207" y="192" width="1" height="1" fill="#ffe060"/><rect x="225" y="306" width="3" height="3" fill="#ff1f8e"/><rect x="226" y="307" width="1" height="1" fill="#ffe060"/><rect x="244" y="191" width="3" height="3" fill="#ff1f8e"/><rect x="245" y="192" width="1" height="1" fill="#ffe060"/><rect x="264" y="306" width="3" height="3" fill="#ff1f8e"/><rect x="265" y="307" width="1" height="1" fill="#ffe060"/><rect x="283" y="306" width="3" height="3" fill="#ff1f8e"/><rect x="284" y="307" width="1" height="1" fill="#ffe060"/><rect x="302" y="306" width="3" height="3" fill="#ff1f8e"/><rect x="303" y="307" width="1" height="1" fill="#ffe060"/><rect x="322" y="306" width="3" height="3" fill="#ff1f8e"/><rect x="323" y="307" width="1" height="1" fill="#ffe060"/><rect x="341" y="191" width="3" height="3" fill="#ff1f8e"/><rect x="342" y="192" width="1" height="1" fill="#ffe060"/><rect x="360" y="191" width="3" height="3" fill="#ff1f8e"/><rect x="361" y="192" width="1" height="1" fill="#ffe060"/><rect x="379" y="191" width="3" height="3" fill="#ff1f8e"/><rect x="380" y="192" width="1" height="1" fill="#ffe060"/><rect x="418" y="312" width="3" height="3" fill="#ff1f8e"/><rect x="419" y="313" width="1" height="1" fill="#ffe060"/><rect x="437" y="321" width="3" height="3" fill="#ff1f8e"/><rect x="438" y="322" width="1" height="1" fill="#ffe060"/><rect x="457" y="237" width="3" height="3" fill="#ff1f8e"/><rect x="458" y="238" width="1" height="1" fill="#ffe060"/><rect x="476" y="229" width="3" height="3" fill="#ff1f8e"/><rect x="477" y="230" width="1" height="1" fill="#ffe060"/><rect x="495" y="343" width="3" height="3" fill="#ff1f8e"/><rect x="496" y="344" width="1" height="1" fill="#ffe060"/><rect x="515" y="230" width="3" height="3" fill="#ff1f8e"/><rect x="516" y="231" width="1" height="1" fill="#ffe060"/><rect x="534" y="232" width="3" height="3" fill="#ff1f8e"/><rect x="535" y="233" width="1" height="1" fill="#ffe060"/><rect x="553" y="336" width="3" height="3" fill="#ff1f8e"/><rect x="554" y="337" width="1" height="1" fill="#ffe060"/><rect x="573" y="248" width="3" height="3" fill="#ff1f8e"/><rect x="574" y="249" width="1" height="1" fill="#ffe060"/><rect x="592" y="161" width="3" height="3" fill="#ff1f8e"/><rect x="593" y="162" width="1" height="1" fill="#ffe060"/><rect x="611" y="268" width="3" height="3" fill="#ff1f8e"/><rect x="612" y="269" width="1" height="1" fill="#ffe060"/><rect x="631" y="265" width="3" height="3" fill="#ff1f8e"/><rect x="632" y="266" width="1" height="1" fill="#ffe060"/><rect x="650" y="153" width="3" height="3" fill="#ff1f8e"/><rect x="651" y="154" width="1" height="1" fill="#ffe060"/><rect x="669" y="276" width="3" height="3" fill="#ff1f8e"/><rect x="670" y="277" width="1" height="1" fill="#ffe060"/><rect x="689" y="239" width="3" height="3" fill="#ff1f8e"/><rect x="690" y="240" width="1" height="1" fill="#ffe060"/><rect x="708" y="244" width="3" height="3" fill="#ff1f8e"/><rect x="709" y="245" width="1" height="1" fill="#ffe060"/><rect x="727" y="274" width="3" height="3" fill="#ff1f8e"/><rect x="728" y="275" width="1" height="1" fill="#ffe060"/><rect x="747" y="152" width="3" height="3" fill="#ff1f8e"/><rect x="748" y="153" width="1" height="1" fill="#ffe060"/><rect x="766" y="270" width="3" height="3" fill="#ff1f8e"/><rect x="767" y="271" width="1" height="1" fill="#ffe060"/><rect x="785" y="258" width="3" height="3" fill="#ff1f8e"/><rect x="786" y="259" width="1" height="1" fill="#ffe060"/><rect x="804" y="170" width="3" height="3" fill="#ff1f8e"/><rect x="805" y="171" width="1" height="1" fill="#ffe060"/><rect x="824" y="204" width="3" height="3" fill="#ff1f8e"/><rect x="825" y="205" width="1" height="1" fill="#ffe060"/><rect x="843" y="171" width="3" height="3" fill="#ff1f8e"/><rect x="844" y="172" width="1" height="1" fill="#ffe060"/><rect x="862" y="263" width="3" height="3" fill="#ff1f8e"/><rect x="863" y="264" width="1" height="1" fill="#ffe060"/><rect x="882" y="266" width="3" height="3" fill="#ff1f8e"/><rect x="883" y="267" width="1" height="1" fill="#ffe060"/><rect x="901" y="158" width="3" height="3" fill="#ff1f8e"/><rect x="902" y="159" width="1" height="1" fill="#ffe060"/><rect x="920" y="258" width="3" height="3" fill="#ff1f8e"/><rect x="921" y="259" width="1" height="1" fill="#ffe060"/><rect x="940" y="312" width="3" height="3" fill="#ff1f8e"/><rect x="941" y="313" width="1" height="1" fill="#ffe060"/><rect x="959" y="312" width="3" height="3" fill="#ff1f8e"/><rect x="960" y="313" width="1" height="1" fill="#ffe060"/><rect x="978" y="257" width="3" height="3" fill="#ff1f8e"/><rect x="979" y="258" width="1" height="1" fill="#ffe060"/><rect x="998" y="156" width="3" height="3" fill="#ff1f8e"/><rect x="999" y="157" width="1" height="1" fill="#ffe060"/><rect x="1017" y="273" width="3" height="3" fill="#ff1f8e"/><rect x="1018" y="274" width="1" height="1" fill="#ffe060"/></g><clipPath id="c2"><rect x="110" y="452" width="908" height="206.5"/></clipPath><g clip-path="url(#c2)" shape-rendering="crispEdges"><rect x="109.5" y="649.5" width="2" height="2" fill="#000" stroke="#ff1493" stroke-width="1"/><rect x="128.5" y="648.5" width="2" height="2" fill="#000" stroke="#ff1493" stroke-width="1"/><rect x="148.5" y="650.5" width="2" height="2" fill="#000" stroke="#ff1493" stroke-width="1"/><rect x="167.5" y="647.5" width="2" height="2" fill="#000" stroke="#ff1493" stroke-width="1"/><rect x="186.5" y="651.5" width="2" height="2" fill="#000" stroke="#ff1493" stroke-width="1"/><rect x="206.5" y="650.5" width="2" height="2" fill="#000" stroke="#ff1493" stroke-width="1"/><rect x="225.5" y="650.5" width="2" height="2" fill="#000" stroke="#ff1493" stroke-width="1"/><rect x="244.5" y="650.5" width="2" height="2" fill="#000" stroke="#ff1493" stroke-width="1"/><rect x="264.5" y="648.5" width="2" height="2" fill="#000" stroke="#ff1493" stroke-width="1"/><rect x="283.5" y="649.5" width="2" height="2" fill="#000" stroke="#ff1493" stroke-width="1"/><rect x="302.5" y="651.5" width="2" height="2" fill="#000" stroke="#ff1493" stroke-width="1"/><rect x="322.5" y="649.5" width="2" height="2" fill="#000" stroke="#ff1493" stroke-width="1"/><rect x="341.5" y="649.5" width="2" height="2" fill="#000" stroke="#ff1493" stroke-width="1"/><rect x="360.5" y="650.5" width="2" height="2" fill="#000" stroke="#ff1493" stroke-width="1"/><rect x="379.5" y="650.5" width="2" height="2" fill="#000" stroke="#ff1493" stroke-width="1"/><rect x="418.5" y="505.5" width="2" height="2" fill="#000" stroke="#ff1493" stroke-width="1"/><rect x="437.5" y="601.5" width="2" height="2" fill="#000" stroke="#ff1493" stroke-width="1"/><rect x="457.5" y="534.5" width="2" height="2" fill="#000" stroke="#ff1493" stroke-width="1"/><rect x="476.5" y="553.5" width="2" height="2" fill="#000" stroke="#ff1493" stroke-width="1"/><rect x="495.5" y="554.5" width="2" height="2" fill="#000" stroke="#ff1493" stroke-width="1"/><rect x="515.5" y="541.5" width="2" height="2" fill="#000" stroke="#ff1493" stroke-width="1"/><rect x="534.5" y="501.5" width="2" height="2" fill="#000" stroke="#ff1493" stroke-width="1"/><rect x="553.5" y="515.5" width="2" height="2" fill="#000" stroke="#ff1493" stroke-width="1"/><rect x="573.5" y="499.5" width="2" height="2" fill="#000" stroke="#ff1493" stroke-width="1"/><rect x="592.5" y="574.5" width="2" height="2" fill="#000" stroke="#ff1493" stroke-width="1"/><rect x="611.5" y="556.5" width="2" height="2" fill="#000" stroke="#ff1493" stroke-width="1"/><rect x="631.5" y="545.5" width="2" height="2" fill="#000" stroke="#ff1493" stroke-width="1"/><rect x="650.5" y="485.5" width="2" height="2" fill="#000" stroke="#ff1493" stroke-width="1"/><rect x="669.5" y="548.5" width="2" height="2" fill="#000" stroke="#ff1493" stroke-width="1"/><rect x="689.5" y="474.5" width="2" height="2" fill="#000" stroke="#ff1493" stroke-width="1"/><rect x="708.5" y="512.5" width="2" height="2" fill="#000" stroke="#ff1493" stroke-width="1"/><rect x="727.5" y="567.5" width="2" height="2" fill="#000" stroke="#ff1493" stroke-width="1"/><rect x="747.5" y="536.5" width="2" height="2" fill="#000" stroke="#ff1493" stroke-width="1"/><rect x="766.5" y="524.5" width="2" height="2" fill="#000" stroke="#ff1493" stroke-width="1"/><rect x="785.5" y="475.5" width="2" height="2" fill="#000" stroke="#ff1493" stroke-width="1"/><rect x="804.5" y="507.5" width="2" height="2" fill="#000" stroke="#ff1493" stroke-width="1"/><rect x="824.5" y="543.5" width="2" height="2" fill="#000" stroke="#ff1493" stroke-width="1"/><rect x="843.5" y="588.5" width="2" height="2" fill="#000" stroke="#ff1493" stroke-width="1"/><rect x="862.5" y="540.5" width="2" height="2" fill="#000" stroke="#ff1493" stroke-width="1"/><rect x="882.5" y="475.5" width="2" height="2" fill="#000" stroke="#ff1493" stroke-width="1"/><rect x="901.5" y="559.5" width="2" height="2" fill="#000" stroke="#ff1493" stroke-width="1"/><rect x="920.5" y="527.5" width="2" height="2" fill="#000" stroke="#ff1493" stroke-width="1"/><rect x="940.5" y="613.5" width="2" height="2" fill="#000" stroke="#ff1493" stroke-width="1"/><rect x="959.5" y="518.5" width="2" height="2" fill="#000" stroke="#ff1493" stroke-width="1"/><rect x="978.5" y="503.5" width="2" height="2" fill="#000" stroke="#ff1493" stroke-width="1"/><rect x="998.5" y="518.5" width="2" height="2" fill="#000" stroke="#ff1493" stroke-width="1"/><rect x="1017.5" y="504.5" width="2" height="2" fill="#000" stroke="#ff1493" stroke-width="1"/></g><rect x="899" y="156" width="92" height="47.5" fill="rgba(0,0,0,0.7)"/><rect x="121" y="156" width="83" height="22" fill="rgba(0,0,0,0.7)"/><rect x="393" y="155" width="19" height="10" fill="rgba(0,0,0,0.7)"/><rect x="393" y="226" width="17" height="10" fill="rgba(0,0,0,0.7)"/><rect x="899" y="464" width="70" height="46" fill="rgba(0,0,0,0.75)"/><rect x="121" y="464" width="71" height="22" fill="rgba(0,0,0,0.75)"/><rect x="393" y="480" width="19" height="10" fill="rgba(0,0,0,0.75)"/><path d="M393.3 173.6L400.6 166.29999999999998L407.90000000000003 173.6L400.6 180.9Z" fill="#fff"/><path d="M394.40000000000003 244.6L400.6 238.4L406.8 244.6L400.6 250.79999999999998Z" fill="#000" stroke="#fff" stroke-width="2"/><path d="M400.6 240.5V248" stroke="#f6f02c" stroke-width="1"/><path d="M393.2 498.7L400.5 491.4L407.8 498.7L400.5 506.0Z" fill="#fff"/></svg>
<svg style="left:0;top:0;pointer-events:none" width="1040" height="784" viewBox="0 0 1040 784"><defs><linearGradient id="gbtn" x1="0" y1="0" x2="0" y2="1"><stop offset="0" stop-color="#93c5f3"/><stop offset="1" stop-color="#5e9fe3"/></linearGradient><linearGradient id="gclose" x1="0" y1="0" x2="0" y2="1"><stop offset="0" stop-color="#f8bb8e"/><stop offset=".5" stop-color="#f09a5c"/><stop offset="1" stop-color="#ee8a44"/></linearGradient><linearGradient id="gspec" x1="0" y1="0" x2="0" y2="1"><stop offset="0" stop-color="#ffb838"/><stop offset=".55" stop-color="#ffc860"/><stop offset="1" stop-color="#ffb040"/></linearGradient><linearGradient id="gfade" x1="0" y1="0" x2="0" y2="1"><stop offset="0" stop-color="#111"/><stop offset="1" stop-color="#111" stop-opacity="0.15"/></linearGradient></defs><clipPath id="cw"><rect x="8" y="8" width="1024" height="768"/></clipPath><g clip-path="url(#cw)"><rect x="978.5" y="10.9" width="15" height="15" rx="2.5" fill="url(#gbtn)" stroke="#3f86d6"/><rect x="979.5" y="11.9" width="13" height="13" rx="2" fill="none" stroke="#a9d2f6" stroke-opacity=".9"/><rect x="982.0" y="20.9" width="6" height="2" fill="#fff"/><rect x="997.8" y="10.9" width="15" height="15" rx="2.5" fill="url(#gbtn)" stroke="#3f86d6"/><rect x="998.8" y="11.9" width="13" height="13" rx="2" fill="none" stroke="#a9d2f6" stroke-opacity=".9"/><rect x="1004.0999999999999" y="14.2" width="5.4" height="5" fill="none" stroke="#fff" stroke-width="1.3"/><rect x="1000.9" y="17.4" width="5.6" height="5" fill="#6aa8e8" stroke="#fff" stroke-width="1.3"/><rect x="1017.3" y="10.9" width="15" height="15" rx="2.5" fill="url(#gclose)" stroke="#e0915a"/><rect x="1018.3" y="11.9" width="13" height="13" rx="2" fill="none" stroke="#fbd0ac" stroke-opacity=".8"/><path d="M1022.0999999999999 15.7L1027.5 21.099999999999998M1027.5 15.7L1022.0999999999999 21.099999999999998" stroke="#d9772f" stroke-width="3.6" stroke-linecap="square"/><path d="M1022.0999999999999 15.7L1027.5 21.099999999999998M1027.5 15.7L1022.0999999999999 21.099999999999998" stroke="#fff" stroke-width="2" stroke-linecap="square"/></g><rect x="10" y="11" width="16" height="16" fill="#0a0a6a"/><path d="M10.8 26.4C12 24.6 12.3 20 12.5 15.6L13.4 13.4L14.4 15L15.2 15.6L16.3 12.1L17.6 15L19 15.6L20.4 14.6L21.4 15.2L22.3 13.7L23.3 15.2C23.5 20 23.9 24.6 25.2 26.4Z" fill="url(#gspec)"/><path d="M16.3 12.6C16.3 18 15.8 23 12.6 26.5L21 26.5C18 23 17.2 18 16.9 12.6Z" fill="#f23a1c" fill-opacity=".9"/><rect x="10" y="26.3" width="16" height="0.7" fill="#1a0040"/><path d="M27.1 37.8L32.2 43.3H22Z" fill="#0a0a0a"/><rect x="19.5" y="45" width="15" height="3.6" fill="#0a0a0a"/><path d="M17 84.2V70.4Q17 69.6 17.8 69.6H19.2L20 67.4Q20.2 67 20.8 67H27.6Q28.2 67 28.3 67.6L28.6 69.6H35.6Q36.4 69.6 36.4 70.4V73.6" fill="#fafafa" stroke="#141414" stroke-width="1.8" stroke-linejoin="round"/><path d="M20.4 73.8H39.4L35.6 84.6H16.9Z" fill="#f2f2f2" stroke="#141414" stroke-width="1.8" stroke-linejoin="round"/><rect x="53.2" y="65.2" width="21.6" height="21.8" rx="0.8" fill="#fbfbfb" stroke="#141414" stroke-width="1.6"/><rect x="57.6" y="65.2" width="13.2" height="11.4" fill="#f1f1f1" stroke="#3a3a3a" stroke-width="1.3"/><rect x="57.6" y="82.4" width="13.2" height="4.6" fill="#fff" stroke="#141414" stroke-width="1.2"/><rect x="62.4" y="83" width="7.6" height="3.6" fill="#8a8a8a"/><path d="M112.6 76.6C112 70.5 107 66.8 101.6 67.2C96.5 67.6 92.8 71 91.4 75.6" fill="none" stroke="#141414" stroke-width="1.2"/><path d="M108.2 69.6C104 67.6 97.5 69.5 95.6 76.2" fill="none" stroke="#141414" stroke-width="1.3"/><path d="M87.2 74.4L98.6 77.3L91.4 83.8Z" fill="#c6c6c6" stroke="#141414" stroke-width="1.2" stroke-linejoin="round"/><path d="M123 76.6C123.6 70.5 128.6 66.8 134 67.2C139.1 67.6 142.8 71 144.2 75.6" fill="none" stroke="#8c8c8c" stroke-width="1.2"/><path d="M127.4 69.6C131.6 67.6 138.1 69.5 140 76.2" fill="none" stroke="#8c8c8c" stroke-width="1.3"/><path d="M148.4 74.4L137 77.3L144.2 83.8Z" fill="#c6c6c6" stroke="#8c8c8c" stroke-width="1.2" stroke-linejoin="round"/><rect x="166" y="65.8" width="17.2" height="14.2" rx="0.6" fill="#fafafa" stroke="#2a2a2a" stroke-width="1.1"/><path d="M166 68.5H183.2" stroke="#2a2a2a" stroke-width="1"/><rect x="160.8" y="73" width="17.2" height="13" rx="0.6" fill="#f1f1f1" stroke="#141414" stroke-width="1.5"/><rect x="161.5" y="73.7" width="15.8" height="2" fill="#8a8a8a"/><path d="M160.8 76.2H178" stroke="#141414" stroke-width="1.1"/><circle cx="207.9" cy="75.8" r="9.1" fill="#0a0a0a"/><path d="M205.52 67.02L205.58 64.13L210.22 64.13L210.28 67.02L212.42 67.90L214.51 65.91L217.79 69.19L215.80 71.28L216.68 73.42L219.57 73.48L219.57 78.12L216.68 78.18L215.80 80.32L217.79 82.41L214.51 85.69L212.42 83.70L210.28 84.58L210.22 87.47L205.58 87.47L205.52 84.58L203.38 83.70L201.29 85.69L198.01 82.41L200.00 80.32L199.12 78.18L196.23 78.12L196.23 73.48L199.12 73.42L200.00 71.28L198.01 69.19L201.29 65.91L203.38 67.90Z" fill="#0a0a0a"/><circle cx="207.9" cy="75.8" r="5.3" fill="#fdfdfd"/><path d="M236 66H252.2V79.6H248L245 83.4" fill="none" stroke="#141414" stroke-width="1.4"/><path d="M236 66V79.6H240L242.6 83.4" fill="none" stroke="#141414" stroke-width="1.4"/><rect x="236.7" y="66.7" width="14.8" height="12.2" fill="#f4f4f4"/><path d="M242.4 83L243.5 87.4M245.2 83L244.2 87.4" stroke="url(#gfade)" stroke-width="1.3"/><path d="M239.8 69.3H248M243.9 69.3V78" stroke="#0a0a0a" stroke-width="2.2" fill="none"/><path d="M267.6 70.2C270.5 71 271 69.6 272.4 66.8C273.8 63.8 276.6 63.2 278.2 66.2C279.8 69.4 281.2 71 283.2 71C285.4 71 286.6 69 287.8 66.4C289.2 63.6 292 63.4 293 66.4" fill="none" stroke="#141414" stroke-width="1.8" stroke-linecap="round"/><path d="M274.3 72V79" stroke="#141414" stroke-width="1"/><path d="M272.40000000000003 77.4H276.2L274.3 83.4Z" fill="#141414"/><path d="M279.6 72V79" stroke="#141414" stroke-width="1"/><path d="M277.70000000000005 77.4H281.5L279.6 83.4Z" fill="#141414"/><path d="M284.7 72V79" stroke="#141414" stroke-width="1"/><path d="M282.8 77.4H286.59999999999997L284.7 83.4Z" fill="#141414"/><rect x="270" y="83.4" width="19.6" height="5.2" fill="#0a0a0a"/><rect x="273.4" y="85" width="1.6" height="2.2" fill="#c8c8c8"/><rect x="278.7" y="85" width="1.6" height="2.2" fill="#c8c8c8"/><rect x="283.79999999999995" y="85" width="1.6" height="2.2" fill="#c8c8c8"/><path d="M308.7 64.4V87.4M322.9 64.4V87.4" stroke="#7a7a7a" stroke-width="1.4"/><path d="M311 66.7H320.6" stroke="#555" stroke-width="1"/><path d="M309.6 66.7L313 64.7V68.7ZM322 66.7L318.6 64.7V68.7Z" fill="#0a0a0a"/><path d="M303.2 81.4C304.7 82.4 306.59999999999997 82.6 307.59999999999997 80.4C308.8 77.6 309.2 70 312.09999999999997 70C315.2 70 315.2 82.4 318.8 82.4C322.4 82.4 322.59999999999997 70 325.59999999999997 70C327.59999999999997 70 328.2 72.4 328.59999999999997 74.8" fill="none" stroke="#141414" stroke-width="1.9" stroke-linecap="round"/><path d="M344.4 65H364M344.4 86.9H364" stroke="#7a7a7a" stroke-width="1.4"/><path d="M340.8 69V83" stroke="#6a6a6a" stroke-width="1.2"/><path d="M340.8 65.4L342.8 70.4H338.8ZM340.8 86.4L342.8 81.4H338.8Z" fill="#0a0a0a"/><path d="M343.4 81.4C344.59999999999997 82.4 346.0 82.6 346.79999999999995 80.4C348.0 77.6 348.2 69.8 350.79999999999995 69.8C353.4 69.8 353.2 82.4 356.0 82.4C359.0 82.4 359.0 69.8 361.59999999999997 69.8C363.2 69.8 363.79999999999995 72 364.2 74.4" fill="none" stroke="#141414" stroke-width="1.9" stroke-linecap="round"/><ellipse cx="387.9" cy="79.3" rx="11.4" ry="6.3" fill="#e4e4e4" stroke="#141414" stroke-width="1.3"/><path d="M387.4 79.4L387.8 74.6C390 74 394 75 395.2 78.4C395.6 79.8 394.6 81.6 393.4 82.2Z" fill="#f8f8f8" stroke="#555" stroke-width="0.8" stroke-dasharray="1.4 0.8"/><path d="M387.4 79.4L393.6 82.2" stroke="#141414" stroke-width="1.1"/><path d="M389.4 78.6C390 77 392.4 77.2 392.6 79" fill="none" stroke="#666" stroke-width="0.8"/><rect x="412.9" y="67" width="20" height="20" rx="2.6" fill="#fbfbfb" stroke="#5a5a5a" stroke-width="1.2"/><circle cx="431.6" cy="68.6" r="4.6" fill="#fdfdfd"/><path d="M431.60 64.00L432.69 66.90L435.78 67.04L433.36 68.97L434.19 71.96L431.60 70.25L429.01 71.96L429.84 68.97L427.42 67.04L430.51 66.90Z" fill="#0a0a0a"/><path d="M833 75.1L839.2 70V80.2Z" fill="#4b9bd9"/><path d="M898.6 73H909.8L904.2 79.2Z" fill="#0a0a0a"/><path d="M978.6 73H989.8L984.2 79.2Z" fill="#0a0a0a"/><path d="M925 71.6H933V69.2L939.2 73.8L933 78.4V76H925Z" fill="#1fcf1f"/><circle cx="1015" cy="68.0" r="1.9" fill="#1a1a1a"/><circle cx="1015" cy="75.8" r="1.9" fill="#1a1a1a"/><circle cx="1015" cy="83.7" r="1.9" fill="#1a1a1a"/><rect x="988.1" y="97.9" width="16.8" height="16.8" rx="2.5" fill="url(#gbtn)" stroke="#3f86d6"/><rect x="989.1" y="98.9" width="14.8" height="14.8" rx="2" fill="none" stroke="#a9d2f6" stroke-opacity=".9"/><rect x="992.5" y="102.30000000000001" width="8" height="8" fill="#6aa8e8" stroke="#fff" stroke-width="1.3"/><rect x="992.5" y="102.30000000000001" width="8" height="2" fill="#fff"/><rect x="1009.1" y="97.9" width="16.8" height="16.8" rx="2.5" fill="url(#gclose)" stroke="#e0915a"/><rect x="1010.1" y="98.9" width="14.8" height="14.8" rx="2" fill="none" stroke="#fbd0ac" stroke-opacity=".8"/><path d="M1013.9 102.70000000000002L1021.1 109.9M1021.1 102.70000000000002L1013.9 109.9" stroke="#d9772f" stroke-width="3.6" stroke-linecap="square"/><path d="M1013.9 102.70000000000002L1021.1 109.9M1021.1 102.70000000000002L1013.9 109.9" stroke="#fff" stroke-width="2" stroke-linecap="square"/><rect x="988.1" y="406.1" width="16.6" height="16.6" rx="2" fill="#cfcfcf" stroke="#b0b0b0"/><rect x="989.1" y="407.1" width="14.600000000000001" height="14.600000000000001" rx="1.5" fill="none" stroke="#e2e2e2"/><rect x="992.4" y="410.40000000000003" width="8" height="8" fill="#c8c8c8" stroke="#e6e6e6" stroke-width="1.3"/><rect x="992.4" y="410.40000000000003" width="8" height="2" fill="#e6e6e6"/><rect x="1009.3" y="406.1" width="16.8" height="16.6" rx="2" fill="#cfcfcf" stroke="#b0b0b0"/><rect x="1010.3" y="407.1" width="14.8" height="14.600000000000001" rx="1.5" fill="none" stroke="#e2e2e2"/><path d="M1014.0999999999999 410.8L1021.3 418.00000000000006M1021.3 410.8L1014.0999999999999 418.00000000000006" stroke="#e6e6e6" stroke-width="1.6" stroke-linecap="square"/><rect x="16" y="98" width="16" height="16" fill="#e8e0d8"/><rect x="16" y="98" width="15" height="15" fill="#000"/><rect x="21.8" y="100" width="1.2" height="2" fill="#fff"/><path d="M25 101.5v1.6M26 100.2l1.6 1.2" stroke="#fff" stroke-width="1.1"/><path d="M18.4 105.5l1.6 4M22.2 110.6l1.6-5M25.6 110.6q2-0.4 2.4-5" stroke="#ffee00" stroke-width="1.6" fill="none"/><path d="M19.6 109.2v1.6M23.2 106l-0.8 3M27 106.4l-0.6 3.4M28.6 105.4v5.4" stroke="#00e8f8" stroke-width="1.4" fill="none"/><rect x="16" y="406" width="16" height="16" fill="#dadada"/><rect x="16" y="406" width="15" height="15" fill="#000"/><path d="M18.6 409.4h3M18.6 411.6h3M24 409.2l1 2.6l1.2-2.6l1 2.6" stroke="#fff" stroke-width="1" fill="none"/><path d="M18.2 417.6h2.2l0.6-3.4l0.8 5.4l0.6-2h3.4l0.8-1.6l0.8 2.6l0.8-1h1" stroke="#ffee00" stroke-width="1.3" fill="none"/><ellipse cx="21.5" cy="152.6" rx="3.9" ry="2.9" fill="#bdbdbd"/><rect x="20.0" y="151.4" width="3" height="2.4" fill="#58a838"/><rect x="21.7" y="151.0" width="1.6" height="1.6" fill="#e8e060"/><rect x="17.8" y="152.8" width="7.6" height="1.1" fill="#2a2a3a"/><path d="M19.0 155.20000000000002Q21.5 156.6 24.0 155.20000000000002" stroke="#2430a0" stroke-width="1.1" fill="none"/><ellipse cx="21.5" cy="252.0" rx="3.9" ry="2.9" fill="#bdbdbd"/><rect x="20.0" y="250.8" width="3" height="2.4" fill="#58a838"/><rect x="21.7" y="250.4" width="1.6" height="1.6" fill="#e8e060"/><rect x="17.8" y="252.20000000000002" width="7.6" height="1.1" fill="#2a2a3a"/><path d="M19.0 254.60000000000002Q21.5 256.0 24.0 254.60000000000002" stroke="#2430a0" stroke-width="1.1" fill="none"/><ellipse cx="117.2" cy="370.4" rx="3.9" ry="2.9" fill="#bdbdbd"/><rect x="115.7" y="369.2" width="3" height="2.4" fill="#58a838"/><rect x="117.4" y="368.8" width="1.6" height="1.6" fill="#e8e060"/><rect x="113.5" y="370.59999999999997" width="7.6" height="1.1" fill="#2a2a3a"/><path d="M114.7 373.0Q117.2 374.4 119.7 373.0" stroke="#2430a0" stroke-width="1.1" fill="none"/><ellipse cx="877" cy="370.59999999999997" rx="3.9" ry="2.9" fill="#bdbdbd"/><rect x="875.5" y="369.4" width="3" height="2.4" fill="#58a838"/><rect x="877.2" y="369.0" width="1.6" height="1.6" fill="#e8e060"/><rect x="873.3" y="370.79999999999995" width="7.6" height="1.1" fill="#2a2a3a"/><path d="M874.5 373.2Q877 374.59999999999997 879.5 373.2" stroke="#2430a0" stroke-width="1.1" fill="none"/><ellipse cx="21.5" cy="460.59999999999997" rx="3.9" ry="2.9" fill="#bdbdbd"/><rect x="20.0" y="459.4" width="3" height="2.4" fill="#58a838"/><rect x="21.7" y="459.0" width="1.6" height="1.6" fill="#e8e060"/><rect x="17.8" y="460.79999999999995" width="7.6" height="1.1" fill="#2a2a3a"/><path d="M19.0 463.2Q21.5 464.59999999999997 24.0 463.2" stroke="#2430a0" stroke-width="1.1" fill="none"/><ellipse cx="21.5" cy="645.6" rx="3.9" ry="2.9" fill="#bdbdbd"/><rect x="20.0" y="644.4" width="3" height="2.4" fill="#58a838"/><rect x="21.7" y="644.0" width="1.6" height="1.6" fill="#e8e060"/><rect x="17.8" y="645.8" width="7.6" height="1.1" fill="#2a2a3a"/><path d="M19.0 648.1999999999999Q21.5 649.6 24.0 648.1999999999999" stroke="#2430a0" stroke-width="1.1" fill="none"/><ellipse cx="117.2" cy="677.6" rx="3.9" ry="2.9" fill="#bdbdbd"/><rect x="115.7" y="676.4" width="3" height="2.4" fill="#58a838"/><rect x="117.4" y="676.0" width="1.6" height="1.6" fill="#e8e060"/><rect x="113.5" y="677.8" width="7.6" height="1.1" fill="#2a2a3a"/><path d="M114.7 680.1999999999999Q117.2 681.6 119.7 680.1999999999999" stroke="#2430a0" stroke-width="1.1" fill="none"/><ellipse cx="873" cy="677.6" rx="3.9" ry="2.9" fill="#bdbdbd"/><rect x="871.5" y="676.4" width="3" height="2.4" fill="#58a838"/><rect x="873.2" y="676.0" width="1.6" height="1.6" fill="#e8e060"/><rect x="869.3" y="677.8" width="7.6" height="1.1" fill="#2a2a3a"/><path d="M870.5 680.1999999999999Q873 681.6 875.5 680.1999999999999" stroke="#2430a0" stroke-width="1.1" fill="none"/><circle cx="1010.9" cy="727" r="8.5" fill="#0a0a0a"/><path d="M1009.02 718.71L1009.06 715.95L1012.74 715.95L1012.78 718.71L1015.43 719.81L1017.41 717.89L1020.01 720.49L1018.09 722.47L1019.19 725.12L1021.95 725.16L1021.95 728.84L1019.19 728.88L1018.09 731.53L1020.01 733.51L1017.41 736.11L1015.43 734.19L1012.78 735.29L1012.74 738.05L1009.06 738.05L1009.02 735.29L1006.37 734.19L1004.39 736.11L1001.79 733.51L1003.71 731.53L1002.61 728.88L999.85 728.84L999.85 725.16L1002.61 725.12L1003.71 722.47L1001.79 720.49L1004.39 717.89L1006.37 719.81Z" fill="#0a0a0a"/><circle cx="1010.9" cy="727" r="5.0" fill="#f2f2f2"/></svg>
<svg style="left:0;top:0;pointer-events:none;z-index:5" width="1040" height="784" viewBox="0 0 1040 784"><path d="M943.6 52.3L950.2 41.6H953.8L947.2 52.3Z" fill="#2fb6dc"/></svg>
<span class="t" style="left:30.50px;top:-0.50px;font-size:13px;font-weight:700;letter-spacing:0.136px;color:#fff;text-shadow:0 0 2px rgba(30,60,120,.55);">Tek RSA5100B</span>
<span class="t" style="left:52.50px;top:25.00px;font-size:14.5px;letter-spacing:-1.300px;">File</span>
<span class="t" style="left:89.25px;top:25.00px;font-size:14.5px;letter-spacing:-1.083px;">View</span>
<span class="t" style="left:136.25px;top:25.00px;font-size:14.5px;letter-spacing:-0.125px;">Markers</span>
<span class="t" style="left:205.00px;top:25.00px;font-size:14.5px;letter-spacing:-0.312px;">Setup</span>
<span class="t" style="left:259.50px;top:25.00px;font-size:14.5px;letter-spacing:-0.292px;">Presets</span>
<span class="t" style="left:325.00px;top:25.00px;font-size:14.5px;letter-spacing:-0.125px;">Tools</span>
<span class="t" style="left:376.25px;top:25.00px;font-size:14.5px;letter-spacing:-0.400px;">Window</span>
<span class="t" style="left:444.50px;top:25.00px;font-size:14.5px;letter-spacing:-1.083px;">Help</span>
<span class="t" style="left:778.80px;top:55.50px;font-size:10.5px;letter-spacing:-0.360px;color:#14202c;">Preset</span>
<span class="t" style="left:846.80px;top:54.60px;font-size:15px;letter-spacing:-0.800px;">Replay</span>
<span class="t" style="left:944.70px;top:54.80px;font-size:15px;letter-spacing:-1.050px;">Run</span>
<span class="t" style="left:36.75px;top:87.00px;font-size:13px;font-weight:700;letter-spacing:0.078px;color:#fff;text-shadow:0 0 2px rgba(30,60,120,.55);">Demod I&amp;Q vs Time</span>
<span class="t" style="left:54.25px;top:106.00px;font-size:12.5px;letter-spacing:-0.029px;">Freq Error: -15.23 Hz, Auto</span>
<span class="t" style="left:37.00px;top:133.00px;font-size:12.5px;letter-spacing:-0.050px;">178 mV</span>
<span class="t" style="left:28.50px;top:223.00px;font-size:12.5px;letter-spacing:-0.250px;">Position:</span>
<span class="t" style="left:32.50px;top:240.00px;font-size:12.5px;letter-spacing:-0.125px;">2.17 mV</span>
<span class="t" style="left:18.50px;top:321.75px;font-size:12.5px;letter-spacing:-0.250px;">-173 mV</span>
<span class="t" style="left:129.25px;top:350.50px;font-size:12.5px;letter-spacing:-0.083px;">Position: 73.00 Symbol</span>
<span class="t" style="left:889.25px;top:351.00px;font-size:12.5px;letter-spacing:-0.500px;">Scale:</span>
<span class="t" style="left:933.75px;top:351.00px;font-size:12.5px;letter-spacing:-0.114px;">47.00 Symbol</span>
<span class="t" style="left:27.50px;top:349.75px;font-size:12.5px;letter-spacing:-0.312px;">Autoscale</span>
<span class="t" style="left:36.75px;top:395.00px;font-size:13px;font-weight:700;letter-spacing:-0.175px;color:#f4f4f4;">EVM vs Time</span>
<span class="t" style="left:54.25px;top:417.75px;font-size:12.5px;letter-spacing:-0.029px;">Freq Error: -15.23 Hz, Auto</span>
<span class="t" style="left:37.50px;top:441.00px;font-size:12.5px;letter-spacing:0.200px;">97.1 %</span>
<span class="t" style="left:28.50px;top:616.00px;font-size:12.5px;letter-spacing:-0.250px;">Position:</span>
<span class="t" style="left:32.50px;top:632.75px;font-size:12.5px;letter-spacing:0.125px;">-2.89 %</span>
<span class="t" style="left:129.25px;top:657.75px;font-size:12.5px;letter-spacing:-0.083px;">Position: 73.00 Symbol</span>
<span class="t" style="left:886.50px;top:658.00px;font-size:12.5px;letter-spacing:-0.500px;">Scale:</span>
<span class="t" style="left:929.00px;top:658.00px;font-size:12.5px;letter-spacing:-0.136px;">47.00 Symbol</span>
<span class="t" style="left:27.50px;top:654.00px;font-size:12.5px;letter-spacing:-0.312px;">Autoscale</span>
<span class="t" style="left:21.25px;top:673.50px;font-size:11px;letter-spacing:-0.750px;">RMS:</span>
<span class="t" style="left:65.00px;top:673.50px;font-size:11px;letter-spacing:0.214px;">11.636 %</span>
<span class="t" style="left:141.75px;top:673.50px;font-size:11px;letter-spacing:-0.438px;">Peak:</span>
<span class="t" style="left:185.00px;top:673.50px;font-size:11px;letter-spacing:0.036px;">98.278 %</span>
<span class="t" style="left:262.50px;top:673.00px;font-size:11px;">@</span>
<span class="t" style="left:281.25px;top:673.00px;font-size:11px;letter-spacing:-0.333px;">207.00 Symbol</span>
<span class="t" style="left:11.25px;top:707.50px;font-size:15px;letter-spacing:0.167px;">Demod IQ vs T</span>
<span class="t" style="left:124.50px;top:707.50px;font-size:15px;letter-spacing:-0.531px;">Frequency</span>
<span class="t" style="left:201.00px;top:707.50px;font-size:15px;letter-spacing:-0.300px;">1.00000 GHz</span>
<span class="t" style="left:331.25px;top:707.50px;font-size:15px;letter-spacing:-0.458px;">Ref Lev</span>
<span class="t" style="left:391.25px;top:707.50px;font-size:15px;letter-spacing:-0.107px;">0.00 dBm</span>
<span class="t" style="left:508.00px;top:707.50px;font-size:15px;letter-spacing:-0.417px;">Meas BW</span>
<span class="t" style="left:582.50px;top:707.50px;font-size:15px;font-style:italic;letter-spacing:-0.312px;">160.0 MHz</span>
<span class="t" style="left:881.30px;top:707.80px;font-size:15px;letter-spacing:-0.467px;">Markers</span>
<span class="t" style="left:947.00px;top:707.80px;font-size:15px;letter-spacing:-0.340px;">Traces</span>
<span class="t" style="left:16.25px;top:739.75px;font-size:12px;letter-spacing:-0.292px;">Stopped</span>
<span class="t" style="left:130.50px;top:739.75px;font-size:12px;letter-spacing:-0.025px;">Not aligned</span>
<span class="t" style="left:422.50px;top:739.75px;font-size:12px;letter-spacing:-0.344px;">Real Time</span>
<span class="t" style="left:502.50px;top:739.75px;font-size:12px;letter-spacing:-0.500px;">DPX Density</span>
<span class="t" style="left:610.50px;top:739.75px;font-size:12px;letter-spacing:-0.393px;">Ref: Int</span>
<span class="t" style="left:675.50px;top:739.75px;font-size:12px;letter-spacing:-0.250px;">Atten: 15 dB</span>
<span class="t" style="left:122.50px;top:140.50px;font-size:11px;letter-spacing:-0.154px;color:#fff;">MR: 119.127 mV</span>
<span class="t" style="left:122.50px;top:152.50px;font-size:11px;color:#fff;">88.00 Symbol</span>
<span class="t" style="left:900.00px;top:140.60px;font-size:11px;letter-spacing:-0.143px;color:#fff;">M1: -747.475 uV</span>
<span class="t" style="left:900.00px;top:153.00px;font-size:11px;letter-spacing:0.018px;color:#fff;">88.00 Symbol</span>
<span class="t" style="left:900.00px;top:165.00px;font-size:11px;letter-spacing:-0.033px;color:#fff;">ΔM1: -119.874 mV</span>
<span class="t" style="left:900.00px;top:176.80px;font-size:11px;color:#fff;">0.00 Symbol</span>
<span class="t" style="left:394.00px;top:139.90px;font-size:11px;letter-spacing:-0.200px;color:#fff;">MR</span>
<span class="t" style="left:394.00px;top:211.00px;font-size:11px;letter-spacing:-0.800px;color:#fff;">M1</span>
<span class="t" style="left:122.50px;top:448.70px;font-size:11px;letter-spacing:-0.173px;color:#fff;">MR: 72.080 %</span>
<span class="t" style="left:122.50px;top:461.00px;font-size:11px;color:#fff;">88.00 Symbol</span>
<span class="t" style="left:900.00px;top:448.70px;font-size:11px;letter-spacing:-0.155px;color:#fff;">M1: 72.080 %</span>
<span class="t" style="left:900.00px;top:461.00px;font-size:11px;letter-spacing:0.055px;color:#fff;">88.00 Symbol</span>
<span class="t" style="left:900.00px;top:473.40px;font-size:11px;letter-spacing:-0.127px;color:#fff;">ΔM1: 0.000 %</span>
<span class="t" style="left:900.00px;top:484.90px;font-size:11px;letter-spacing:0.060px;color:#fff;">0.00 Symbol</span>
<span class="t" style="left:393.60px;top:465.10px;font-size:11px;letter-spacing:0.600px;color:#fff;">MR</span>
<span class="t" style="left:612.00px;top:336.00px;font-size:8.5px;font-weight:700;color:#8b0a0a;">T</span>
<span class="t" style="left:612.00px;top:643.00px;font-size:8.5px;font-weight:700;color:#8b0a0a;">T</span>
<span class="t" style="left:121.80px;top:316.00px;font-size:11px;font-weight:700;color:#e8e020;">*</span>
<span class="t" style="left:121.80px;top:623.40px;font-size:11px;font-weight:700;color:#e8e020;">*</span>
<span class="t" style="left:385.20px;top:49.60px;font-size:7.5px;font-weight:700;opacity:.99;">N</span>
<span class="t" style="left:418.10px;top:57.60px;font-size:18px;font-weight:700;opacity:.99;">P</span>
<span class="t" style="left:922.60px;top:26.00px;font-size:18.5px;font-weight:700;letter-spacing:0.337px;color:#3a3d47;-webkit-text-stroke:0.6px #3a3d47;">Tektronix</span>
</body></html>
